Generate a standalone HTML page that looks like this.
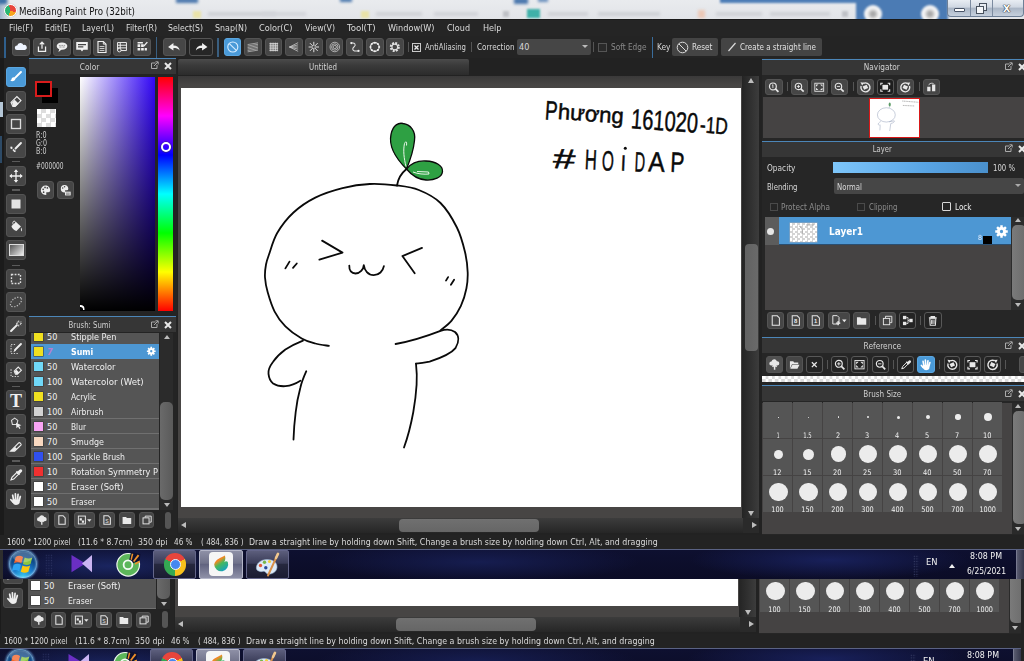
<!DOCTYPE html>
<html><head><meta charset="utf-8"><title>MediBang Paint Pro (32bit)</title>
<style>
*{box-sizing:border-box;margin:0;padding:0}
html,body{width:1024px;height:661px;overflow:hidden;background:#232323;}
body{position:relative;font-family:"DejaVu Sans Condensed","Liberation Sans",sans-serif;font-size:10px;color:#d8d8d8;}
.a{position:absolute}
.t{position:absolute;white-space:nowrap;line-height:12px}
.btn{position:absolute;background:#464646;border:1px solid #545454;border-radius:3px}
.btn.on{background:#4a9ad8;border-color:#5aa6e0}
.btn svg{position:absolute;left:0;top:0;width:100%;height:100%}
.hdr{position:absolute;background:#363636;border-top:1px solid #4c86b8;height:16px}
.hdr .c{position:absolute;left:0;right:22px;top:1.800px;text-align:center;line-height:12px}
.hdr .c span{display:inline-block;white-space:nowrap;color:#d0d0d0;font-size:9px}
.sep{position:absolute;width:1px;background:#555}
</style></head><body>

<div id="title" class="a" style="left:0;top:0;width:1024px;height:19px;background:linear-gradient(#e9ebee,#e2e4e8);overflow:hidden">
<div class="a" style="left:0;top:0;width:10px;height:19px;background:linear-gradient(90deg,#9db4cc,#e6e8ec)"></div>
<div class="a" style="left:-2px;top:-2px;width:9px;height:6px;background:#3b6ea5;filter:blur(1.5px)"></div>
<div class="a" style="left:176px;top:-2px;width:22px;height:5px;background:#4a77ad;filter:blur(1.5px)"></div>
<div class="a" style="left:340px;top:-2px;width:12px;height:4px;background:#4a77ad;filter:blur(1.5px)"></div>
<div class="a" style="left:514px;top:-2px;width:14px;height:6px;background:#4a77ad;filter:blur(1.5px)"></div>
<div class="a" style="left:538px;top:-2px;width:10px;height:4px;background:#6a8fbd;filter:blur(1.5px)"></div>
<div class="a" style="left:193px;top:11px;width:8px;height:7px;background:#e9e2a8;filter:blur(1.2px)"></div>
<div class="a" style="left:361px;top:11px;width:8px;height:7px;background:#e9e2a8;filter:blur(1.2px)"></div>
<div class="a" style="left:527px;top:9px;width:13px;height:9px;background:#3fb0a8;filter:blur(1.2px)"></div>
<div class="a" style="left:208px;top:12px;width:68px;height:4px;background:#cfd1d6;filter:blur(1.5px)"></div>
<div class="a" style="left:262px;top:12px;width:44px;height:4px;background:#d3d5da;filter:blur(1.5px)"></div>
<div class="a" style="left:376px;top:12px;width:46px;height:4px;background:#d0d2d7;filter:blur(1.5px)"></div>
<div class="a" style="left:434px;top:12px;width:44px;height:4px;background:#d1d3d8;filter:blur(1.5px)"></div>
<div class="a" style="left:548px;top:12px;width:40px;height:4px;background:#d0d2d7;filter:blur(1.5px)"></div>
<div class="a" style="left:598px;top:12px;width:62px;height:4px;background:#cfd1d6;filter:blur(1.5px)"></div>
<div class="a" style="left:716px;top:12px;width:46px;height:4px;background:#d0d2d7;filter:blur(1.5px)"></div>
<div class="a" style="left:770px;top:12px;width:60px;height:4px;background:#cfd1d6;filter:blur(1.5px)"></div>
<div class="a" style="left:503px;top:11px;width:6px;height:6px;background:#bfc1c6;filter:blur(1.2px)"></div>
<div class="a" style="left:842px;top:11px;width:6px;height:6px;background:#bfc1c6;filter:blur(1.2px)"></div>
<div class="a" style="left:698px;top:10px;width:7px;height:8px;background:#ecc8b6;filter:blur(1.5px)"></div>
<div class="a" style="left:720px;top:-2px;width:140px;height:5px;background:#4d7db6;filter:blur(1px)"></div>
<div class="a" style="left:856px;top:-3px;width:92px;height:26px;background:#4b7bb4;filter:blur(1.2px)"></div>
<div class="a" style="left:864px;top:5px;width:18px;height:18px;border-radius:9px;background:radial-gradient(#a8a8a8 15%,#f4f4f4 45%);filter:blur(1px)"></div>
<div class="a" style="left:921px;top:5px;width:18px;height:18px;border-radius:9px;background:radial-gradient(#a8a8a8 15%,#f4f4f4 45%);filter:blur(1px)"></div>
<div class="a" style="left:947px;top:0;width:77px;height:17px;border:1px solid #6d7f96;border-top:0;border-radius:0 0 4px 4px;background:linear-gradient(#e8edf3 0%,#cfd7e2 45%,#a9b5c5 50%,#c6d0dd 100%)"></div>
<div class="a" style="left:970px;top:0;width:1px;height:16px;background:#7c8ba0"></div>
<div class="a" style="left:992px;top:0;width:1px;height:16px;background:#7c8ba0"></div>
<div class="a" style="left:954px;top:8px;width:11px;height:4px;background:#fff;border:1px solid #4a5568;border-radius:1px"></div>
<div class="a" style="left:979px;top:3px;width:8px;height:8px;border:1.5px solid #49525f;background:#e8ecf2"></div>
<div class="a" style="left:976px;top:6px;width:8px;height:8px;border:1.5px solid #49525f;background:#f4f6f9"></div>
<div class="t" style="left:1003px;top:1px;font:bold 13px 'Liberation Sans',sans-serif;color:#fff;text-shadow:0 0 1px #333,0 0 1px #333,0 0 1px #333;line-height:14px">x</div>
<div class="a" style="left:4px;top:4px;width:13px;height:13px;border-radius:7px;background:conic-gradient(from 200deg,#2bb673 0 40%,#e8453c 40% 75%,#f6a31c 75% 100%);border:1px solid #fff;box-shadow:0 0 1px #888"></div>
<div class="t" style="left: 19px; top: 4.5px; font-size: 9.8px; color: rgb(17, 17, 17); line-height: 14px; font-family: &quot;DejaVu Sans Condensed&quot;, &quot;Liberation Sans&quot;, sans-serif; transform: scaleX(0.988); transform-origin: 0px 50%;">MediBang Paint Pro (32bit)</div>
</div>

<div id="menu" class="a" style="left:0;top:19px;width:1024px;height:17px;background:#252525;border-top:1px solid #1a1a1a">
<div class="t" style="left: 9px; top: 2px; font-size: 9.5px; color: rgb(220, 220, 220); transform: scaleX(0.929); transform-origin: 0px 50%;">File(F)</div>
<div class="t" style="left: 45px; top: 2px; font-size: 9.5px; color: rgb(220, 220, 220); transform: scaleX(0.908); transform-origin: 0px 50%;">Edit(E)</div>
<div class="t" style="left: 82px; top: 2px; font-size: 9.5px; color: rgb(220, 220, 220); transform: scaleX(0.907); transform-origin: 0px 50%;">Layer(L)</div>
<div class="t" style="left: 126px; top: 2px; font-size: 9.5px; color: rgb(220, 220, 220); transform: scaleX(0.919); transform-origin: 0px 50%;">Filter(R)</div>
<div class="t" style="left: 168px; top: 2px; font-size: 9.5px; color: rgb(220, 220, 220); transform: scaleX(0.91); transform-origin: 0px 50%;">Select(S)</div>
<div class="t" style="left: 214.5px; top: 2px; font-size: 9.5px; color: rgb(220, 220, 220); transform: scaleX(0.925); transform-origin: 0px 50%;">Snap(N)</div>
<div class="t" style="left: 258.5px; top: 2px; font-size: 9.5px; color: rgb(220, 220, 220); transform: scaleX(0.958); transform-origin: 0px 50%;">Color(C)</div>
<div class="t" style="left: 304.5px; top: 2px; font-size: 9.5px; color: rgb(220, 220, 220); transform: scaleX(0.915); transform-origin: 0px 50%;">View(V)</div>
<div class="t" style="left: 347px; top: 2px; font-size: 9.5px; color: rgb(220, 220, 220); transform: scaleX(1.006); transform-origin: 0px 50%;">Tool(T)</div>
<div class="t" style="left: 387.5px; top: 2px; font-size: 9.5px; color: rgb(220, 220, 220); transform: scaleX(0.953); transform-origin: 0px 50%;">Window(W)</div>
<div class="t" style="left: 447px; top: 2px; font-size: 9.5px; color: rgb(220, 220, 220); transform: scaleX(0.942); transform-origin: 0px 50%;">Cloud</div>
<div class="t" style="left: 483px; top: 2px; font-size: 9.5px; color: rgb(220, 220, 220); transform: scaleX(0.949); transform-origin: 0px 50%;">Help</div>
</div>

<div id="tbar" class="a" style="left:0;top:36px;width:1024px;height:22px;background:#242424">
<div class="a" style="left:4px;top:1px;width:2px;height:21px;background:#2f5f8c"></div>
<div class="btn" style="left:12px;top:2px;width:18px;height:18px;"><svg viewBox="0 0 18 18"><path d="M4.5 12.5a2.6 2.6 0 0 1 .3-5.2 3.6 3.6 0 0 1 6.9-.6 2.9 2.9 0 0 1 1.6 5.8z" fill="#eef4ff"></path></svg></div>
<div class="btn" style="left:32.5px;top:2px;width:18px;height:18px;"><svg viewBox="0 0 18 18"><path d="M5 8.5v5.5h8V8.5M9 11V3.5M6.5 6L9 3.5 11.500 6" fill="none" stroke="#f0f0f0" stroke-width="1.4"></path></svg></div>
<div class="btn" style="left:52.7px;top:2px;width:18px;height:18px;"><svg viewBox="0 0 18 18"><ellipse cx="9" cy="8" rx="6" ry="4.200" fill="#f0f0f0"></ellipse><path d="M6 11L5 14.500l4-3z" fill="#f0f0f0"></path><path d="M5.500 7.200h2M8.300 7.200h2M11 7.200h1.500M6 9h2.500M9.500 9h2.500" stroke="#777" stroke-width=".8"></path></svg></div>
<div class="btn" style="left:72.8px;top:2px;width:18px;height:18px;"><svg viewBox="0 0 18 18"><path d="M2.500 3.500h13v8.500h-5l-1.500 2.200L7.500 12h-5z" fill="#f0f0f0"></path><path d="M4.500 6.300h9M4.500 8.800h6" stroke="#444" stroke-width="1.300"></path></svg></div>
<div class="btn" style="left:93px;top:2px;width:18px;height:18px;"><svg viewBox="0 0 18 18"><path d="M4.500 2.800h6l3 3v9.400h-9z" fill="none" stroke="#f0f0f0" stroke-width="1.300"></path><path d="M10.500 2.800v3h3" fill="none" stroke="#f0f0f0" stroke-width="1"></path><path d="M6.300 8.500h5.400M6.300 10.700h5.400M6.300 12.900h5.400" stroke="#f0f0f0" stroke-width=".9"></path></svg></div>
<div class="btn" style="left:113px;top:2px;width:18px;height:18px;"><svg viewBox="0 0 18 18"><path d="M4 4h10v9H4zM4 7h10M4 10h10M7 4v9" fill="none" stroke="#f0f0f0" stroke-width="1.100"></path><circle cx="6" cy="12.500" r="2" fill="#484848" stroke="#f0f0f0"></circle></svg></div>
<div class="btn" style="left:133px;top:2px;width:18px;height:18px;"><svg viewBox="0 0 18 18"><path d="M4 6h3v3H4zM8 6h3v3H8zM4 10h3v3H4zM8 10h3v3H8zM12 10h2.500v3H12zM4 3.500h6v1.500H4z" fill="#f0f0f0"></path><path d="M11 8l4-4.500" stroke="#f0f0f0" stroke-width="1.600"></path></svg></div>
<div class="a" style="left:155.500px;top:1px;width:1.500px;height:21px;background:#3a5f80"></div>
<div class="btn" style="left:162.5px;top:2px;width:23.5px;height:18px;"><svg viewBox="0 0 23 18"><path d="M4 9l6-4.500v2.700c4 0 6.500 1.800 7 5.800-1.800-2.300-3.800-2.800-7-2.800v2.800z" fill="#f0f0f0"></path></svg></div>
<div class="btn" style="left:189px;top:2px;width:23.5px;height:18px;background:#262626;"><svg viewBox="0 0 23 18"><path d="M19 9l-6-4.500v2.700c-4 0-6.500 1.800-7 5.800 1.800-2.300 3.800-2.800 7-2.800v2.800z" fill="#f0f0f0"></path></svg></div>
<div class="a" style="left:217px;top:2px;width:1.500px;height:19px;background:#3a5f80"></div>
<div class="btn on" style="left:223.8px;top:2px;width:17.6px;height:18px;"><svg viewBox="0 0 18 18"><circle cx="9" cy="9" r="5.800" fill="none" stroke="#d6ecff" stroke-width="1.300"></circle><path d="M5 5l8 8" stroke="#d6ecff" stroke-width="1.300"></path></svg></div>
<div class="btn" style="left:244.3px;top:2px;width:17.6px;height:18px;"><svg viewBox="0 0 18 18"><path d="M3 13l12-2M3 11.300l12-2M3 9.600l12-2M3 7.900l12-2M3 6.200l12-2M3 14.600l12-2" stroke="#c8c8c8" stroke-width=".8"></path></svg></div>
<div class="btn" style="left:264.7px;top:2px;width:17.6px;height:18px;"><svg viewBox="0 0 18 18"><path d="M5 4v10M7 4v10M9 4v10M11 4v10M13 4v10M4 5h10M4 7h10M4 9h10M4 11h10M4 13h10" stroke="#dcdcdc" stroke-width=".9"></path></svg></div>
<div class="btn" style="left:285px;top:2px;width:17.6px;height:18px;"><svg viewBox="0 0 18 18"><path d="M4 9l10-5M4 9l10-2.500M4 9h10M4 9l10 2.500M4 9l10 5" stroke="#c8c8c8" stroke-width=".9"></path></svg></div>
<div class="btn" style="left:305.2px;top:2px;width:17.6px;height:18px;"><svg viewBox="0 0 18 18"><path d="M9 3v12M3 9h12M4.500 4.500l9 9M13.500 4.500l-9 9" stroke="#e8e8e8" stroke-width="1.100"></path><circle cx="9" cy="9" r="1.300" fill="#484848"></circle></svg></div>
<div class="btn" style="left:325.5px;top:2px;width:17.6px;height:18px;"><svg viewBox="0 0 18 18"><circle cx="9" cy="9" r="5.500" fill="none" stroke="#ccc" stroke-width=".9"></circle><circle cx="9" cy="9" r="3.700" fill="none" stroke="#ccc" stroke-width=".9"></circle><circle cx="9" cy="9" r="1.900" fill="none" stroke="#ccc" stroke-width=".9"></circle></svg></div>
<div class="btn" style="left:345.7px;top:2px;width:17.6px;height:18px;"><svg viewBox="0 0 18 18"><path d="M5 4.500c4-1 6 2 3 4.500s-1 5.500 5 4.500" fill="none" stroke="#e0e0e0" stroke-width="1.200"></path><circle cx="5" cy="4.500" r="1.300" fill="#eee"></circle><circle cx="13.300" cy="13.500" r="1.300" fill="#eee"></circle></svg></div>
<div class="btn" style="left:366px;top:2px;width:17.6px;height:18px;"><svg viewBox="0 0 18 18"><circle cx="9" cy="9" r="5" fill="none" stroke="#e8e8e8" stroke-width="1.300"></circle><g fill="#eee"><circle cx="9" cy="4" r="1.200"></circle><circle cx="9" cy="14" r="1.200"></circle><circle cx="4" cy="9" r="1.200"></circle><circle cx="14" cy="9" r="1.200"></circle><circle cx="5.500" cy="5.500" r="1.200"></circle><circle cx="12.500" cy="5.500" r="1.200"></circle><circle cx="5.500" cy="12.500" r="1.200"></circle><circle cx="12.500" cy="12.500" r="1.200"></circle></g></svg></div>
<div class="btn" style="left:386.2px;top:2px;width:17.6px;height:18px;"><svg viewBox="0 0 18 18"><circle cx="9" cy="9" r="4.600" fill="none" stroke="#e0e0e0" stroke-width="2.400" stroke-dasharray="2.200 1.400"></circle><circle cx="9" cy="9" r="3.300" fill="none" stroke="#e0e0e0" stroke-width="1.200"></circle></svg></div>
<div class="sep" style="left:407.500px;top:6px;height:10px"></div>
<div class="a" style="left:412px;top:7px;width:9px;height:9px;border:1px solid #c8c8c8;background:#2a2a2a"></div><svg class="a" style="left:412px;top:7px;width:9px;height:9px" viewBox="0 0 9 9"><path d="M2.500 2.500l4 4M6.500 2.500l-4 4" stroke="#eee" stroke-width="1.300"></path></svg>
<div class="t" style="left: 425px; top: 5px; font-size: 9px; color: rgb(216, 216, 216); transform: scaleX(0.857); transform-origin: 0px 50%;">AntiAliasing</div>
<div class="sep" style="left:470.500px;top:6px;height:10px"></div>
<div class="t" style="left: 476.5px; top: 5px; font-size: 9px; color: rgb(216, 216, 216); transform: scaleX(0.896); transform-origin: 0px 50%;">Correction</div>
<div class="a" style="left:517px;top:2.500px;width:73.500px;height:16.500px;background:#464646;border-radius:2px"></div>
<div class="t" style="left:519px;top:5px;font-size:9px;color:#d8d8d8">40</div>
<div class="a" style="left:581.500px;top:9px;border:3px solid transparent;border-top:3.500px solid #bbb;border-bottom:0"></div>
<div class="sep" style="left:593px;top:6px;height:10px"></div>
<div class="a" style="left:598px;top:7px;width:9px;height:9px;border:1px solid #555;background:#2a2a2a"></div>
<div class="t" style="left: 610.5px; top: 5px; font-size: 9px; color: rgb(138, 138, 138); transform: scaleX(0.912); transform-origin: 0px 50%;">Soft Edge</div>
<div class="a" style="left:651.500px;top:1px;width:1.500px;height:21px;background:#3a6d9c"></div>
<div class="t" style="left: 656.5px; top: 5px; font-size: 9px; color: rgb(216, 216, 216); transform: scaleX(0.922); transform-origin: 0px 50%;">Key</div>
<div class="a" style="left:672px;top:2px;width:46px;height:18px;background:#444;border-radius:2px"></div>
<svg class="a" style="left:676px;top:4.500px;width:13px;height:13px" viewBox="0 0 13 13"><circle cx="6.500" cy="6.500" r="5.300" fill="none" stroke="#ddd" stroke-width="1"></circle><path d="M2.800 2.800l7.400 7.400" stroke="#ddd" stroke-width="1"></path></svg>
<div class="t" style="left: 691.5px; top: 5px; font-size: 9px; color: rgb(224, 224, 224); transform: scaleX(0.907); transform-origin: 0px 50%;">Reset</div>
<div class="a" style="left:721px;top:2px;width:101px;height:18px;background:#444;border-radius:2px"></div>
<svg class="a" style="left:726px;top:5px;width:12px;height:12px" viewBox="0 0 12 12"><path d="M2.500 10L9.500 2" stroke="#ddd" stroke-width="1.200"></path></svg>
<div class="t" style="left: 740px; top: 5px; font-size: 9px; color: rgb(224, 224, 224); transform: scaleX(0.888); transform-origin: 0px 50%;">Create a straight line</div>
</div>


<div id="tools" class="a" style="left:0;top:58px;width:29px;height:477px;background:#242424">
<div class="a" style="left:0;top:0;width:4px;height:477px;background:#1b1b1b"></div>
<div class="a" style="left:0;top:44px;width:3px;height:15px;background:#b4c6d6"></div>
<div class="a" style="left:0;top:78px;width:2px;height:27px;background:#2d4a66"></div>
<div class="btn on" style="left:6px;top:9px;width:20px;height:20px;"><svg viewBox="0 0 20 20"><path d="M15.500 4.500L9 11" stroke="#fff" stroke-width="2.200" stroke-linecap="round"></path><path d="M8.300 10.300c-1.500-.5-3 .3-3.200 2-.1 1-.8 1.600-1.600 1.800 2 1 5 .7 5.800-1.500z" fill="#fff"></path></svg></div>
<div class="btn" style="left:6px;top:32.5px;width:20px;height:20px;"><svg viewBox="0 0 20 20"><path d="M4.500 11.500L11 5l4.500 4.500L9 16H6.500z" fill="none" stroke="#eee" stroke-width="1.300"></path><path d="M5.500 11.500l3-3 4.500 4.500-3.500 3H7z" fill="#eee"></path></svg></div>
<div class="btn" style="left:6px;top:56px;width:20px;height:20px;"><svg viewBox="0 0 20 20"><rect x="5" y="5" width="10" height="10" fill="none" stroke="#ddd" stroke-width="1.500"></rect></svg></div>
<div class="btn" style="left:6px;top:79.5px;width:20px;height:20px;"><svg viewBox="0 0 20 20"><path d="M15.500 4.500L9.500 10.500" stroke="#eee" stroke-width="2.200" stroke-linecap="round"></path><path d="M4.500 9.500l2 2 2 2" stroke="#eee" stroke-width="1.800" stroke-dasharray="1.800 1.200"></path><rect x="3.800" y="8.500" width="2" height="2" fill="#eee"></rect><rect x="7.500" y="12.500" width="2" height="2" fill="#eee"></rect></svg></div>
<div class="a" style="left:12px;top:102.5px;width:8px;height:1.500px;background:#5a5a5a"></div>
<div class="btn" style="left:6px;top:108px;width:20px;height:20px;"><svg viewBox="0 0 20 20"><path d="M10 3.500v13M3.500 10h13" stroke="#eee" stroke-width="1.500"></path><path d="M10 2.500l2.500 3h-5zM10 17.500l2.500-3h-5zM2.500 10l3-2.500v5zM17.500 10l-3-2.500v5z" fill="#eee"></path></svg></div>
<div class="a" style="left:12px;top:131px;width:8px;height:1.500px;background:#5a5a5a"></div>
<div class="btn" style="left:6px;top:135.5px;width:20px;height:20px;"><svg viewBox="0 0 20 20"><rect x="5" y="5" width="10" height="10" fill="#e4e4e4"></rect></svg></div>
<div class="btn" style="left:6px;top:159px;width:20px;height:20px;"><svg viewBox="0 0 20 20"><path d="M5 9l5-4.500 5.500 5-5 5c-1.500 0-5.500-3-5.500-5.500z" fill="#eee"></path><path d="M7 7.500c-1-2-.5-4 1-4s2 2 2 3.500" fill="none" stroke="#eee" stroke-width="1"></path><path d="M15.800 10.500c.8 1.500 1.200 3 .4 4.500-.8-.8-1-3-.4-4.500z" fill="#eee"></path></svg></div>
<div class="btn" style="left:6px;top:182px;width:20px;height:20px;"><div style="position:absolute;left:1.500px;top:3px;right:1.500px;bottom:3.500px;border:1px solid #ddd;background:linear-gradient(135deg,#555,#eee)"></div></div>
<div class="a" style="left:12px;top:206.5px;width:8px;height:1.500px;background:#5a5a5a"></div>
<div class="btn" style="left:6px;top:211px;width:20px;height:20px;"><svg viewBox="0 0 20 20"><rect x="5" y="5" width="10" height="10" fill="none" stroke="#ddd" stroke-width="1.500" stroke-dasharray="2 1.500"></rect></svg></div>
<div class="btn" style="left:6px;top:234px;width:20px;height:20px;"><svg viewBox="0 0 20 20"><ellipse cx="10" cy="10" rx="7" ry="4.200" transform="rotate(-35 10 10)" fill="none" stroke="#bbb" stroke-width="1.300" stroke-dasharray="1.500 1.500"></ellipse></svg></div>
<div class="btn" style="left:6px;top:257.5px;width:20px;height:20px;"><svg viewBox="0 0 20 20"><path d="M4.500 15.500L11 9" stroke="#eee" stroke-width="2.200" stroke-linecap="round"></path><path d="M13 4v2M13 8.500v2M10 7h2M14.500 7h2M11 5l1 1M15.500 5l-1 1M15.500 9l-1-1" stroke="#eee" stroke-width="1"></path></svg></div>
<div class="btn" style="left:6px;top:281px;width:20px;height:20px;"><svg viewBox="0 0 20 20"><path d="M4.500 6v9h9" fill="none" stroke="#ccc" stroke-width="1.300" stroke-dasharray="1.500 1.500"></path><path d="M4.500 5h5" stroke="#ccc" stroke-width="1.300" stroke-dasharray="1.500 1.500"></path><path d="M15.500 4.500L9 11" stroke="#eee" stroke-width="2.200" stroke-linecap="round"></path><path d="M8.500 10.500l-1.500 3 3-1.500z" fill="#eee"></path></svg></div>
<div class="btn" style="left:6px;top:304px;width:20px;height:20px;"><svg viewBox="0 0 20 20"><path d="M4.500 7v8h9" fill="none" stroke="#ccc" stroke-width="1.300" stroke-dasharray="1.500 1.500"></path><path d="M8 9l4.500-4.500L16 8l-4.500 4.500H9.500z" fill="none" stroke="#eee" stroke-width="1.200"></path><path d="M8.500 9.500l2-2 3 3-2 2H10z" fill="#eee"></path></svg></div>
<div class="a" style="left:12px;top:327.5px;width:8px;height:1.500px;background:#5a5a5a"></div>
<div class="btn" style="left:6px;top:332px;width:20px;height:20px;"><div class="t" style="left:0;right:0;top:1px;text-align:center;font:bold 18px/18px 'Liberation Serif',serif;color:#f0f0f0">T</div></div>
<div class="btn" style="left:6px;top:355.5px;width:20px;height:20px;"><svg viewBox="0 0 20 20"><path d="M5 6l3.500-2.500L12 6l-1 4.500H6z" fill="none" stroke="#ddd" stroke-width="1.200"></path><path d="M10 8.500l6 3-2.500.8 1.500 2.500-1.200.7-1.500-2.500-1.800 1.800z" fill="#eee"></path></svg></div>
<div class="btn" style="left:6px;top:379px;width:20px;height:20px;"><svg viewBox="0 0 20 20"><path d="M4 14.500l9-9c1-1 3.500 1.500 2.500 2.500l-7 6.500z" fill="none" stroke="#eee" stroke-width="1.300"></path><path d="M4 14.500l5-4.500 2 2-3 2.500z" fill="#eee"></path></svg></div>
<div class="a" style="left:12px;top:402px;width:8px;height:1.500px;background:#5a5a5a"></div>
<div class="btn" style="left:6px;top:407px;width:20px;height:20px;"><svg viewBox="0 0 20 20"><path d="M4.500 15.500l1-3 5.500-5.500 2 2-5.500 5.500z" fill="none" stroke="#eee" stroke-width="1.300"></path><path d="M10.500 6l3.500 3.500M12 7.500l2.500-2.500c1-1 2 0 1 1L13 8.500" stroke="#eee" stroke-width="2" fill="none"></path></svg></div>
<div class="btn" style="left:6px;top:430.5px;width:20px;height:20px;"><svg viewBox="0 0 20 20"><g stroke="#eee" stroke-width="1.900" stroke-linecap="round"><path d="M7.300 10.500L6.300 5.800M9.600 10L9.300 4.200M11.800 10.200L12.300 4.900M13.700 11L14.800 7.200M6.800 13.500L4.300 10.800"></path></g><path d="M6.300 10L14.500 10.500L14 14.500C13 16.800 9 17.300 7.500 15.800L5.500 13z" fill="#eee"></path></svg></div>
</div>
<div id="color" class="a" style="left:29px;top:58px;width:148px;height:258px;background:#242424">
<div class="hdr" style="left:0px;top:-0.3px;width:147px"><div class="c" style="right:25px"><span style="transform: scaleX(0.922); transform-origin: 50% 50%;">Color</span></div><svg class="a" style="right:17px;top:2.500px;width:9px;height:9px" viewBox="0 0 9 9"><path d="M5.500 2H1.500v5.500h5.500V4" fill="none" stroke="#aaa" stroke-width="1"></path><path d="M4 5l4-4M5.500 .800h2.700v2.700" fill="none" stroke="#aaa" stroke-width="1"></path></svg><svg class="a" style="right:4px;top:3.500px;width:8px;height:8px" viewBox="0 0 8 8"><path d="M1 1l6 6M7 1l-6 6" stroke="#e8e8e8" stroke-width="2"></path></svg></div>
<div class="a" style="left:13px;top:29.500px;width:16px;height:15.500px;background:#000"></div>
<div class="a" style="left:5.500px;top:22.500px;width:17px;height:16px;background:#000;border:2px solid #d81c1c"></div>
<div class="a" style="left:8px;top:50.500px;width:18.500px;height:18px;background:#fff conic-gradient(#ddd 25%,#fff 0 50%,#ddd 0 75%,#fff 0) 0 0/9px 9px"></div>
<div class="t" style="left: 6.5px; top: 73px; font-size: 8px; line-height: 9px; color: rgb(208, 208, 208); transform: scaleX(0.892); transform-origin: 0px 50%;">R:0</div>
<div class="t" style="left: 6.5px; top: 81.2px; font-size: 8px; line-height: 9px; color: rgb(208, 208, 208); transform: scaleX(0.873); transform-origin: 0px 50%;">G:0</div>
<div class="t" style="left: 6.5px; top: 89.4px; font-size: 8px; line-height: 9px; color: rgb(208, 208, 208); transform: scaleX(0.878); transform-origin: 0px 50%;">B:0</div>
<div class="t" style="left: 6.5px; top: 103.5px; font-size: 8px; line-height: 9px; color: rgb(208, 208, 208); transform: scaleX(0.821); transform-origin: 0px 50%;">#000000</div>
<div class="btn" style="left:7.5px;top:122.5px;width:17px;height:18.5px;"><svg viewBox="0 0 16 16"><path d="M8 3a5 5 0 1 0 0 10c1 0 1.300-.8.800-1.500-.5-.8 0-1.500 1-1.500h1.200a2 2 0 0 0 2-2c0-2.800-2.300-5-5-5z" fill="#eee"></path><circle cx="5.500" cy="7" r=".9" fill="#444"></circle><circle cx="7.500" cy="5" r=".9" fill="#444"></circle><circle cx="10" cy="5.500" r=".9" fill="#444"></circle><circle cx="6" cy="10" r=".9" fill="#444"></circle></svg></div>
<div class="btn" style="left:27.8px;top:122.5px;width:17px;height:18.5px;"><svg viewBox="0 0 16 16"><path d="M7 2.500a4 4 0 1 0 0 8c.8 0 1-.6.600-1.200-.4-.6 0-1.200.800-1.200h1a1.600 1.600 0 0 0 1.600-1.600c0-2.200-1.800-4-4-4z" fill="#eee"></path><circle cx="5" cy="5.500" r=".8" fill="#444"></circle><circle cx="7" cy="4.200" r=".8" fill="#444"></circle><rect x="7.500" y="9.500" width="6" height="4" fill="#eee"></rect><path d="M8.500 11h4M8.500 12.300h4" stroke="#444" stroke-width=".6"></path></svg></div>
<div class="a" style="left:51px;top:18.500px;width:75px;height:234px;background:linear-gradient(to top,#000,rgba(0,0,0,0)),linear-gradient(to right,#fff,#3206f8)"></div>
<div class="a" style="left:129px;top:18.500px;width:15px;height:234px;background:linear-gradient(to bottom,#f00 0%,#f0f 16.670%,#00f 33.330%,#0ff 50%,#0f0 66.670%,#ff0 83.330%,#f00 100%)"></div>
<div class="a" style="left:131.500px;top:84px;width:10px;height:10px;border:2px solid #fff;border-radius:5px;box-shadow:0 0 0 .5px #335"></div>
<div class="a" style="left:46.500px;top:246.500px;width:9px;height:9px;border:2px solid #fff;border-radius:5px;clip-path:inset(0 0 3.500px 4.500px)"></div>
</div>
<div id="brush" class="a" style="left:29px;top:316px;width:148px;height:219px;background:#242424">
<div class="hdr" style="left:0px;top:0.2px;width:147px"><div class="c" style="right:25px"><span style="transform: scaleX(0.856); transform-origin: 50% 50%;">Brush: Sumi</span></div><svg class="a" style="right:17px;top:2.500px;width:9px;height:9px" viewBox="0 0 9 9"><path d="M5.500 2H1.500v5.500h5.500V4" fill="none" stroke="#aaa" stroke-width="1"></path><path d="M4 5l4-4M5.500 .800h2.700v2.700" fill="none" stroke="#aaa" stroke-width="1"></path></svg><svg class="a" style="right:4px;top:3.500px;width:8px;height:8px" viewBox="0 0 8 8"><path d="M1 1l6 6M7 1l-6 6" stroke="#e8e8e8" stroke-width="2"></path></svg></div>
<div class="a" style="left:2px;top:17px;width:128px;height:176.500px;background:#707070;overflow:hidden">
<div class="a" style="left:0;top:-3.60px;width:128px;height:14.200px;background:#555555"><div class="a" style="left:3px;top:2.500px;width:9px;height:9px;background:#f0e020;box-shadow:0 0 0 .5px #333"></div><div class="t" style="left:16px;top:1.500px;font-size:9px;color:#f0f0f0">50</div> <div class="t" style="left: 40px; top: 1.5px; font-size: 9px; color: rgb(240, 240, 240); transform: scaleX(0.999); transform-origin: 0px 50%;">Stipple Pen</div></div>
<div class="a" style="left:0;top:11.38px;width:128px;height:14.200px;background:#4d97d3"><div class="a" style="left:3px;top:2.500px;width:9px;height:9px;background:#f0e020;box-shadow:0 0 0 .5px #333"></div><div class="t" style="left:16px;top:1.500px;font-size:9px;color:#b77fd0;font-weight:bold;font-style:italic">7</div> <div class="t" style="left: 40px; top: 1.5px; font-size: 9px; color: rgb(255, 255, 255); font-weight: bold; transform: scaleX(0.978); transform-origin: 0px 50%;">Sumi</div><svg class="a" style="left:114.500px;top:2px;width:10.500px;height:10.500px" viewBox="0 0 20 20"><path d="M15.98 8.36L18.34 8.34L18.34 11.66L15.98 11.64L15.39 13.07L17.07 14.72L14.72 17.07L13.07 15.39L11.64 15.98L11.66 18.34L8.34 18.34L8.36 15.98L6.93 15.39L5.28 17.07L2.93 14.72L4.61 13.07L4.02 11.64L1.66 11.66L1.66 8.34L4.02 8.36L4.61 6.93L2.93 5.28L5.28 2.93L6.93 4.61L8.36 4.02L8.34 1.66L11.66 1.66L11.64 4.02L13.07 4.61L14.72 2.93L17.07 5.28L15.39 6.93ZM7.80 10.00a2.20 2.20 0 1 0 4.40 0a2.20 2.20 0 1 0 -4.40 0Z" fill="#fff" fill-rule="evenodd"></path></svg></div>
<div class="a" style="left:0;top:26.36px;width:128px;height:14.200px;background:#555555"><div class="a" style="left:3px;top:2.500px;width:9px;height:9px;background:#70d8f8;box-shadow:0 0 0 .5px #333"></div><div class="t" style="left:16px;top:1.500px;font-size:9px;color:#f0f0f0">50</div> <div class="t" style="left: 40px; top: 1.5px; font-size: 9px; color: rgb(240, 240, 240); transform: scaleX(1.02); transform-origin: 0px 50%;">Watercolor</div></div>
<div class="a" style="left:0;top:41.34px;width:128px;height:14.200px;background:#555555"><div class="a" style="left:3px;top:2.500px;width:9px;height:9px;background:#70d8f8;box-shadow:0 0 0 .5px #333"></div><div class="t" style="left:16px;top:1.500px;font-size:9px;color:#f0f0f0">100</div> <div class="t" style="left: 40px; top: 1.5px; font-size: 9px; color: rgb(240, 240, 240); transform: scaleX(1.067); transform-origin: 0px 50%;">Watercolor (Wet)</div></div>
<div class="a" style="left:0;top:56.32px;width:128px;height:14.200px;background:#555555"><div class="a" style="left:3px;top:2.500px;width:9px;height:9px;background:#f0e020;box-shadow:0 0 0 .5px #333"></div><div class="t" style="left:16px;top:1.500px;font-size:9px;color:#f0f0f0">50</div> <div class="t" style="left: 40px; top: 1.5px; font-size: 9px; color: rgb(240, 240, 240); transform: scaleX(0.937); transform-origin: 0px 50%;">Acrylic</div></div>
<div class="a" style="left:0;top:71.30px;width:128px;height:14.200px;background:#555555"><div class="a" style="left:3px;top:2.500px;width:9px;height:9px;background:#d2d2d2;box-shadow:0 0 0 .5px #333"></div><div class="t" style="left:16px;top:1.500px;font-size:9px;color:#f0f0f0">100</div> <div class="t" style="left: 40px; top: 1.5px; font-size: 9px; color: rgb(240, 240, 240); transform: scaleX(0.954); transform-origin: 0px 50%;">Airbrush</div></div>
<div class="a" style="left:0;top:86.28px;width:128px;height:14.200px;background:#555555"><div class="a" style="left:3px;top:2.500px;width:9px;height:9px;background:#f8a4f4;box-shadow:0 0 0 .5px #333"></div><div class="t" style="left:16px;top:1.500px;font-size:9px;color:#f0f0f0">50</div> <div class="t" style="left: 40px; top: 1.5px; font-size: 9px; color: rgb(240, 240, 240); transform: scaleX(0.922); transform-origin: 0px 50%;">Blur</div></div>
<div class="a" style="left:0;top:101.26px;width:128px;height:14.200px;background:#555555"><div class="a" style="left:3px;top:2.500px;width:9px;height:9px;background:#f8d8c0;box-shadow:0 0 0 .5px #333"></div><div class="t" style="left:16px;top:1.500px;font-size:9px;color:#f0f0f0">70</div> <div class="t" style="left: 40px; top: 1.5px; font-size: 9px; color: rgb(240, 240, 240); transform: scaleX(0.987); transform-origin: 0px 50%;">Smudge</div></div>
<div class="a" style="left:0;top:116.24px;width:128px;height:14.200px;background:#555555"><div class="a" style="left:3px;top:2.500px;width:9px;height:9px;background:#3050f0;box-shadow:0 0 0 .5px #333"></div><div class="t" style="left:16px;top:1.500px;font-size:9px;color:#f0f0f0">100</div> <div class="t" style="left: 40px; top: 1.5px; font-size: 9px; color: rgb(240, 240, 240); transform: scaleX(0.957); transform-origin: 0px 50%;">Sparkle Brush</div></div>
<div class="a" style="left:0;top:131.22px;width:128px;height:14.200px;background:#555555"><div class="a" style="left:3px;top:2.500px;width:9px;height:9px;background:#f03030;box-shadow:0 0 0 .5px #333"></div><div class="t" style="left:16px;top:1.500px;font-size:9px;color:#f0f0f0">10</div> <div class="t" style="left: 40px; top: 1.5px; font-size: 9px; color: rgb(240, 240, 240); transform: scaleX(1.014); transform-origin: 0px 50%;">Rotation Symmetry P</div></div>
<div class="a" style="left:0;top:146.20px;width:128px;height:14.200px;background:#555555"><div class="a" style="left:3px;top:2.500px;width:9px;height:9px;background:#ffffff;box-shadow:0 0 0 .5px #333"></div><div class="t" style="left:16px;top:1.500px;font-size:9px;color:#f0f0f0">50</div> <div class="t" style="left: 40px; top: 1.5px; font-size: 9px; color: rgb(240, 240, 240); transform: scaleX(1.034); transform-origin: 0px 50%;">Eraser (Soft)</div></div>
<div class="a" style="left:0;top:161.18px;width:128px;height:14.200px;background:#555555"><div class="a" style="left:3px;top:2.500px;width:9px;height:9px;background:#ffffff;box-shadow:0 0 0 .5px #333"></div><div class="t" style="left:16px;top:1.500px;font-size:9px;color:#f0f0f0">50</div> <div class="t" style="left: 40px; top: 1.5px; font-size: 9px; color: rgb(240, 240, 240); transform: scaleX(0.945); transform-origin: 0px 50%;">Eraser</div></div>
</div>
<div class="a" style="left:131px;top:17px;width:13px;height:176.500px;background:#2b2b2b"></div>
<div class="a" style="left:134.500px;top:19px;border:3px solid transparent;border-bottom:4.500px solid #bbb;border-top:0"></div>
<div class="a" style="left:134.500px;top:187px;border:3px solid transparent;border-top:4.500px solid #bbb;border-bottom:0"></div>
<div class="a" style="left:130.500px;top:86px;width:13px;height:98px;border-radius:5px;background:linear-gradient(90deg,#6a6a6a,#5a5a5a)"></div>
<div class="btn" style="left:4.6px;top:196.4px;width:15.6px;height:16px;"><svg viewBox="0 0 16 16"><path d="M4.500 9.500a2.300 2.300 0 0 1 .3-4.600 3.200 3.200 0 0 1 6.200-.4 2.500 2.500 0 0 1 .5 5z" fill="#e8e8e8"></path><path d="M8 13.500V8M5.800 10L8 7.800l2.200 2.200" stroke="#e8e8e8" stroke-width="1.600" fill="none"></path></svg></div>
<div class="btn" style="left:24.8px;top:196.4px;width:15.6px;height:16px;"><svg viewBox="0 0 16 16"><path d="M4.500 3h5l2.500 2.500V13h-7.500z" fill="none" stroke="#e8e8e8" stroke-width="1.200"></path></svg></div>
<div class="btn" style="left:44.6px;top:196.4px;width:21px;height:16px;"><svg viewBox="0 0 21 16"><rect x="3.500" y="3.500" width="8" height="9" fill="none" stroke="#e8e8e8" stroke-width="1.100"></rect><path d="M5 6h2.500v2.500H5zM7.500 8.500H10V11H7.500z" fill="#e8e8e8"></path><path d="M13.500 7h5l-2.500 3z" fill="#e8e8e8"></path></svg></div>
<div class="btn" style="left:69.8px;top:196.4px;width:15.8px;height:16px;"><svg viewBox="0 0 16 16"><path d="M4.500 3h5l2.500 2.500V13h-7.500z" fill="none" stroke="#e8e8e8" stroke-width="1.200"></path><text x="6" y="11.500" font-size="6" fill="#e8e8e8" font-family="Liberation Sans,sans-serif">S</text></svg></div>
<div class="btn" style="left:89.8px;top:196.4px;width:15.8px;height:16px;"><svg viewBox="0 0 16 16"><path d="M3 4.500h4l1 1.200h5V12.500H3z" fill="#e8e8e8"></path></svg></div>
<div class="btn" style="left:109.6px;top:196.4px;width:15.8px;height:16px;"><svg viewBox="0 0 16 16"><rect x="3.500" y="5.500" width="7" height="7" fill="none" stroke="#e8e8e8" stroke-width="1.100"></rect><path d="M6 5V3.500h7v7h-2" fill="none" stroke="#e8e8e8" stroke-width="1.100"></path></svg></div>
<div class="a" style="left:135.500px;top:196px;width:6px;height:16.500px;border-radius:3px;background:#555"></div>
</div>

<div id="canvas" class="a" style="left:177px;top:58px;width:585px;height:477px;background:#222">
<div class="a" style="left:1px;top:1px;width:291px;height:15.500px;border-radius:2px 2px 0 0;background:linear-gradient(#4b4b4b,#3a3a3a 40%,#2c2c2c)"></div>
<div class="t" style="left: 132px; top: 3px; font-size: 9px; color: rgb(212, 212, 212); transform: scaleX(0.874); transform-origin: 0px 50%;">Untitled</div>
<div class="a" style="left:1px;top:18px;width:566px;height:441.500px;background:linear-gradient(#3a3939,#474544 9px,#474544)"></div>
<div class="a" style="left:4px;top:29.500px;width:560px;height:419.500px;background:#fff"></div>
<div class="a" style="left:565px;top:18px;width:17px;height:441.500px;background:linear-gradient(90deg,#242424,#3c3c3c)"></div>
<div class="a" style="left:571px;top:20px;border:3px solid transparent;border-bottom:5px solid #bdbdbd;border-top:0"></div>
<div class="a" style="left:571px;top:453px;border:3px solid transparent;border-top:5px solid #bdbdbd;border-bottom:0"></div>
<div class="a" style="left:567.500px;top:186px;width:13.500px;height:107px;border-radius:4px;background:linear-gradient(90deg,#626262,#6a6a6a)"></div>
<div class="a" style="left:1px;top:459.500px;width:581px;height:15.500px;background:linear-gradient(#3c3c3c,#262626)"></div>
<div class="a" style="left:3.500px;top:464px;border:3px solid transparent;border-right:5px solid #bdbdbd;border-left:0"></div>
<div class="a" style="left:574.500px;top:464px;border:3px solid transparent;border-left:5px solid #bdbdbd;border-right:0"></div>
<div class="a" style="left:221.500px;top:461px;width:140.500px;height:12.500px;border-radius:4px;background:linear-gradient(#707070,#666)"></div>
<div class="a" style="left:566px;top:459.500px;width:16px;height:15.500px;background:#2a2a2a"></div>
<div class="a" style="left:574.500px;top:464px;border:3px solid transparent;border-left:5px solid #bdbdbd;border-right:0"></div>
<svg class="a" style="left:4px;top:29.500px;width:560px;height:419.500px" viewBox="181 87.500 560 419.500">
<path d="M406.500 168.500C398 160 388 148 391 134C393 124 399 122 403 123C410 124 416 130 414.500 140C413.500 150 410 160 406.500 168.500Z" fill="#2ea043" stroke="#0a0a0a" stroke-width="1.300"></path>
<path d="M406.500 168.500C411 163 418 160 426 160.500C436 161 443 165 442.500 171C442 177 434 180 426 179.500C418 179 411 174 406.500 168.500Z" fill="#2ea043" stroke="#0a0a0a" stroke-width="1.300"></path>
<path d="M406 166C404 158 403 150 404.500 143C406 140 407 141 406.500 145" fill="none" stroke="#e8f5e8" stroke-width="1"></path>
<path d="M413 171.500C418 173.500 424 174 429 173.500L428.500 171.500L417 171" fill="none" stroke="#e8f5e8" stroke-width="1"></path>
<path d="M406.500 168.500C401 173 398 178 397 185" fill="none" stroke="#0a0a0a" stroke-width="1.800" stroke-linecap="round" stroke-linejoin="round"></path>
<path d="M328.9 345.4C326.6 345.0 319.8 344.2 315.3 343.0C310.8 341.8 306.7 340.9 301.7 338.0C296.7 335.1 289.9 330.3 285.4 325.8C280.9 321.3 277.4 316.5 274.5 310.8C271.6 305.1 269.3 297.4 267.7 291.8C266.1 286.2 265.3 281.6 265.0 277.0C264.7 272.4 265.3 267.8 266.0 264.0C266.7 260.2 267.1 259.2 269.0 254.0C270.9 248.8 273.1 239.5 277.2 232.5C281.3 225.5 287.1 217.9 293.5 212.0C299.9 206.1 307.1 201.2 315.3 197.1C323.5 193.0 333.4 189.9 342.5 187.6C351.6 185.3 360.7 183.9 369.8 183.5C378.9 183.1 388.8 184.0 397.0 185.0C405.2 186.0 411.6 186.6 418.8 189.5C426.1 192.4 434.1 196.2 440.5 202.5C446.9 208.8 452.8 218.8 456.9 227.0C461.0 235.2 463.2 244.0 465.0 251.5C466.8 259.0 467.5 265.9 467.7 272.0C467.9 278.1 467.5 282.4 466.4 288.0C465.3 293.6 463.4 300.0 460.9 305.4C458.4 310.8 454.8 316.3 451.4 320.4C448.0 324.5 442.3 328.2 440.5 329.8" fill="none" stroke="#0a0a0a" stroke-width="1.800" stroke-linecap="round" stroke-linejoin="round"></path>
<path d="M395.600 343.500C410 341 424.200 336.700 440.500 330.400C446 328.500 451.400 329 455 331.500C459 335 459.500 341 455.500 347.600C452 352 446 355.700 429.600 361.200C424 362.500 420 363 416 363.100" fill="none" stroke="#0a0a0a" stroke-width="1.800" stroke-linecap="round" stroke-linejoin="round"></path>
<path d="M416 363.100C417 372 417 378 416.600 384.300C416 394 415 402 413.300 411.500C411 424 408 436 404 447" fill="none" stroke="#0a0a0a" stroke-width="1.800" stroke-linecap="round" stroke-linejoin="round"></path>
<path d="M303 340.200C296 343 291 345.500 285.400 349C280 353 276 357 273.100 361.200C269.500 366 268 370 268.500 373.400C269 378 270.500 381 273.100 383C277 385.500 281 386 285.400 385.700C291 385 296 383 300.400 380.200" fill="none" stroke="#0a0a0a" stroke-width="1.800" stroke-linecap="round" stroke-linejoin="round"></path>
<path d="M306.300 370.700C303.500 377 301.500 382 300.400 387C298 396 296.500 404 295.700 411.500C294.500 421 293.800 430 293.500 439" fill="none" stroke="#0a0a0a" stroke-width="1.800" stroke-linecap="round" stroke-linejoin="round"></path>
<path d="M322.100 240.100L342.500 252.100L319.400 259.200" fill="none" stroke="#0a0a0a" stroke-width="1.800" stroke-linecap="round" stroke-linejoin="round"></path>
<path d="M422 247.400L402.400 255.600L414.700 272.800" fill="none" stroke="#0a0a0a" stroke-width="1.800" stroke-linecap="round" stroke-linejoin="round"></path>
<path d="M349.300 265.100C349 270 351.500 273 355.500 273C360 273 363.500 269 363.800 264.600C364.500 270 368 274.700 373.800 274.700C379 274.700 383 270.500 383.900 265.700" fill="none" stroke="#0a0a0a" stroke-width="1.800" stroke-linecap="round" stroke-linejoin="round"></path>
<path d="M285.400 267.900L289.500 261.100M293 267.300L296.800 263M446 280.100L448.100 276.600M450.900 284.200L454.100 279.300" fill="none" stroke="#0a0a0a" stroke-width="1.800" stroke-linecap="round" stroke-linejoin="round"></path>
<text transform="rotate(4 543 118)" font-family="'Liberation Sans',sans-serif" fill="#0a0a0a" stroke="#0a0a0a" stroke-width=".5"><tspan x="544.500" y="119" font-size="27" textLength="12.500" lengthAdjust="spacingAndGlyphs">P</tspan><tspan x="557.500" y="117.500" font-size="22" textLength="66" lengthAdjust="spacingAndGlyphs">hương</tspan><tspan x="631" y="121.500" font-size="28" textLength="67" lengthAdjust="spacingAndGlyphs">161020</tspan><tspan x="700" y="121" font-size="23" textLength="28" lengthAdjust="spacingAndGlyphs">-1D</tspan></text>
<text transform="rotate(2.500 552 166)" font-family="'Liberation Sans',sans-serif" fill="#0a0a0a" stroke="#0a0a0a" stroke-width=".5" font-size="28"><tspan x="552.8" y="167.5" textLength="22.2" lengthAdjust="spacingAndGlyphs">#</tspan><tspan x="584.5" y="167" textLength="12" lengthAdjust="spacingAndGlyphs">H</tspan><tspan x="601.5" y="167.5" textLength="12" lengthAdjust="spacingAndGlyphs">O</tspan><tspan x="620.5" y="167" textLength="5" lengthAdjust="spacingAndGlyphs" font-size="22">I</tspan><tspan x="634.5" y="167.5" textLength="10.5" lengthAdjust="spacingAndGlyphs">D</tspan><tspan x="648" y="166.5" textLength="16.5" lengthAdjust="spacingAndGlyphs">A</tspan><tspan x="670" y="166" textLength="14" lengthAdjust="spacingAndGlyphs">P</tspan></text>
<circle cx="625.300" cy="147.800" r="1.500" fill="#0a0a0a"></circle>
</svg>
</div>

<div id="right" class="a" style="left:762px;top:58px;width:262px;height:477px;background:#262626;overflow:hidden">
<div class="hdr" style="left:0;top:0.7px;width:262px"><div class="c"><span style="transform: scaleX(0.909); transform-origin: 50% 50%;">Navigator</span></div><svg class="a" style="right:11.500px;top:2.500px;width:9px;height:9px" viewBox="0 0 9 9"><path d="M5.500 2H1.500v5.500h5.500V4" fill="none" stroke="#aaa" stroke-width="1"></path><path d="M4 5l4-4M5.500 .800h2.700v2.700" fill="none" stroke="#aaa" stroke-width="1"></path></svg><svg class="a" style="right:-1.500px;top:3.500px;width:8px;height:8px" viewBox="0 0 8 8"><path d="M1 1l6 6M7 1l-6 6" stroke="#e8e8e8" stroke-width="2"></path></svg></div>
<div class="a" style="left:0;top:18px;width:262px;height:21px;background:#262626"></div>
<div class="btn" style="left:3px;top:20.5px;width:17.5px;height:16.5px;"><svg viewBox="0 0 18 17"><circle cx="8" cy="7.500" r="4" fill="none" stroke="#e8e8e8" stroke-width="1.400"></circle><path d="M11 10.500l3.500 3.500" stroke="#e8e8e8" stroke-width="2"></path><path d="M8 5.500v4M7 6.500l1-1" stroke="#e8e8e8" stroke-width="1"></path></svg></div>
<div class="sep" style="left:24.5px;top:24px;height:9px"></div>
<div class="btn" style="left:29px;top:20.5px;width:16.5px;height:16.5px;"><svg viewBox="0 0 18 17"><circle cx="8" cy="7.500" r="4" fill="none" stroke="#e8e8e8" stroke-width="1.400"></circle><path d="M11 10.500l3.500 3.500" stroke="#e8e8e8" stroke-width="2"></path><path d="M6 7.500h4M8 5.500v4" stroke="#e8e8e8" stroke-width="1.100"></path></svg></div>
<div class="btn" style="left:49.2px;top:20.5px;width:16.5px;height:16.5px;"><svg viewBox="0 0 18 17"><rect x="3.500" y="3.500" width="11" height="10" fill="none" stroke="#e8e8e8" stroke-width="1.100"></rect><path d="M5 5h3L5 8zM13 5v3L10 5zM5 12V9l3 3zM13 12h-3l3-3z" fill="#e8e8e8"></path></svg></div>
<div class="btn" style="left:69.3px;top:20.5px;width:16.5px;height:16.5px;"><svg viewBox="0 0 18 17"><circle cx="8" cy="7.500" r="4" fill="none" stroke="#e8e8e8" stroke-width="1.400"></circle><path d="M11 10.500l3.500 3.500" stroke="#e8e8e8" stroke-width="2"></path><path d="M6 7.500h4" stroke="#e8e8e8" stroke-width="1.100"></path></svg></div>
<div class="sep" style="left:90.5px;top:24px;height:9px"></div>
<div class="btn" style="left:95px;top:20.5px;width:16.8px;height:16.5px;"><svg viewBox="0 0 18 17"><path d="M6.500 3.800A5.500 5.500 0 1 1 3.800 7" fill="none" stroke="#e8e8e8" stroke-width="1.700"></path><path d="M3 2.500l4.500.5-2.500 3.500z" fill="#e8e8e8"></path><rect x="6.300" y="6.300" width="5.400" height="4.400" fill="#e8e8e8" transform="rotate(-25 9 8.500)"></rect></svg></div>
<div class="btn" style="left:115.2px;top:20.5px;width:16.5px;height:16.5px;background:#1e1e1e;border-color:#555;"><svg viewBox="0 0 18 17"><rect x="5.500" y="5.500" width="7" height="6" fill="#e8e8e8"></rect><path d="M3.500 6V3.500H6M12 3.500h2.500V6M14.500 11v2.500H12M6 13.500H3.500V11" fill="none" stroke="#e8e8e8" stroke-width="1.400"></path></svg></div>
<div class="btn" style="left:135.4px;top:20.5px;width:16.6px;height:16.5px;"><svg viewBox="0 0 18 17"><path d="M11.500 3.800A5.500 5.500 0 1 0 14.200 7" fill="none" stroke="#e8e8e8" stroke-width="1.700"></path><path d="M15 2.500l-4.500.5 2.500 3.500z" fill="#e8e8e8"></path><rect x="6.300" y="6.300" width="5.400" height="4.400" fill="#e8e8e8" transform="rotate(25 9 8.500)"></rect></svg></div>
<div class="sep" style="left:156.8px;top:24px;height:9px"></div>
<div class="btn" style="left:161.3px;top:20.5px;width:16.5px;height:16.5px;"><svg viewBox="0 0 18 17"><path d="M4 13.500V8h4v5.500zM10 13.500V5h4v8.500z" fill="#e8e8e8"></path><path d="M6 6c0-3 6-3 6-1.500" fill="none" stroke="#e8e8e8" stroke-width="1"></path></svg></div>
<div class="a" style="left:1px;top:39px;width:261px;height:40.500px;background:#454343"></div>
<div class="a" style="left:106.500px;top:40px;width:51.500px;height:39.500px;background:#fff;border:1.200px solid #d81818"></div>
<svg class="a" style="left:107.500px;top:41px;width:49.500px;height:37.500px" viewBox="181 87.500 560 419.500"><g fill="none" stroke="#98a4bc" stroke-width="6"><ellipse cx="366" cy="265" rx="101" ry="81"></ellipse><path d="M303 340C270 355 260 385 300 380M296 385L293 440M396 343L455 332C462 340 450 355 416 363L404 447"></path><path d="M397 185L406 168"></path></g><ellipse cx="404" cy="148" rx="12" ry="22" fill="#5a9a66"></ellipse><g stroke="#777" stroke-width="6" stroke-dasharray="14 5"><path d="M545 108L728 122M553 158L684 164"></path></g></svg>
<div class="hdr" style="left:0;top:82.7px;width:262px"><div class="c"><span style="transform: scaleX(0.842); transform-origin: 50% 50%;">Layer</span></div><svg class="a" style="right:11.500px;top:2.500px;width:9px;height:9px" viewBox="0 0 9 9"><path d="M5.500 2H1.500v5.500h5.500V4" fill="none" stroke="#aaa" stroke-width="1"></path><path d="M4 5l4-4M5.500 .800h2.700v2.700" fill="none" stroke="#aaa" stroke-width="1"></path></svg><svg class="a" style="right:-1.500px;top:3.500px;width:8px;height:8px" viewBox="0 0 8 8"><path d="M1 1l6 6M7 1l-6 6" stroke="#e8e8e8" stroke-width="2"></path></svg></div>
<div class="t" style="left: 4.5px; top: 104px; font-size: 9px; color: rgb(216, 216, 216); transform: scaleX(0.915); transform-origin: 0px 50%;">Opacity</div>
<div class="a" style="left:71px;top:104px;width:154.500px;height:11px;background:linear-gradient(90deg,#7ec6fa,#58a4e4 60%,#4a90cc)"></div>
<div class="t" style="left: 230.5px; top: 104px; font-size: 9px; color: rgb(216, 216, 216); transform: scaleX(0.855); transform-origin: 0px 50%;">100 %</div>
<div class="t" style="left: 4.5px; top: 122.5px; font-size: 9px; color: rgb(216, 216, 216); transform: scaleX(0.857); transform-origin: 0px 50%;">Blending</div>
<div class="a" style="left:72px;top:120px;width:190px;height:16px;background:#464646;border-radius:2px"></div>
<div class="t" style="left: 74.5px; top: 122.5px; font-size: 9px; color: rgb(216, 216, 216); transform: scaleX(0.854); transform-origin: 0px 50%;">Normal</div>
<div class="a" style="left:253px;top:126px;border:3px solid transparent;border-top:3.500px solid #aaa;border-bottom:0"></div>
<div class="a" style="left:7.500px;top:144.500px;width:8px;height:8px;border:1px solid #4a4a4a"></div>
<div class="t" style="left: 19px; top: 142.5px; font-size: 9px; color: rgb(140, 140, 140); transform: scaleX(0.904); transform-origin: 0px 50%;">Protect Alpha</div>
<div class="a" style="left:94.500px;top:144.500px;width:8px;height:8px;border:1px solid #4a4a4a"></div>
<div class="t" style="left: 106.5px; top: 142.5px; font-size: 9px; color: rgb(140, 140, 140); transform: scaleX(0.864); transform-origin: 0px 50%;">Clipping</div>
<div class="a" style="left:180px;top:144px;width:9px;height:9px;border:1px solid #d8d8d8;border-radius:1px"></div>
<div class="t" style="left: 192.5px; top: 142.5px; font-size: 9px; color: rgb(240, 240, 240); transform: scaleX(0.894); transform-origin: 0px 50%;">Lock</div>
<div class="a" style="left:2.500px;top:158.500px;width:246px;height:93px;background:#454343"></div>
<div class="a" style="left:2.500px;top:158.800px;width:14.500px;height:28.400px;background:#5c5c5c"></div>
<div class="a" style="left:5.200px;top:169.500px;width:7px;height:7px;border-radius:4px;background:#e6e6e6"></div>
<div class="a" style="left:17px;top:158.800px;width:231.500px;height:28.400px;background:#4d97d3;border-bottom:1px solid #2a4e70"></div>
<div class="a" style="left:27.500px;top:164.500px;width:27.500px;height:19px;background:#fff conic-gradient(#d4d4d4 25%,#fff 0 50%,#d4d4d4 0 75%,#fff 0) 0 0/5px 5px;box-shadow:0 0 0 .5px #9ab"></div>
<svg class="a" style="left:27.500px;top:164.500px;width:27.500px;height:19px" viewBox="0 0 27.500 19"><path d="M9 3c3 1 4 5 3 8M16 2h8" stroke="#888" stroke-width=".6" fill="none"></path></svg>
<div class="t" style="left: 66.5px; top: 168px; font-size: 10px; color: rgb(255, 255, 255); font-weight: bold; font-family: &quot;DejaVu Sans&quot;, sans-serif; transform: scaleX(0.894); transform-origin: 0px 50%;">Layer1</div>
<div class="t" style="left: 215.5px; top: 175.5px; font-size: 7px; color: rgb(232, 240, 255); line-height: 9px; transform: scaleX(0.996); transform-origin: 0px 50%;">8</div>
<div class="a" style="left:221px;top:177.500px;width:8.500px;height:8px;background:#000"></div>
<svg class="a" style="left:231.500px;top:165.500px;width:15px;height:15px" viewBox="0 0 20 20"><path d="M15.98 8.36L18.34 8.34L18.34 11.66L15.98 11.64L15.39 13.07L17.07 14.72L14.72 17.07L13.07 15.39L11.64 15.98L11.66 18.34L8.34 18.34L8.36 15.98L6.93 15.39L5.28 17.07L2.93 14.72L4.61 13.07L4.02 11.64L1.66 11.66L1.66 8.34L4.02 8.36L4.61 6.93L2.93 5.28L5.28 2.93L6.93 4.61L8.36 4.02L8.34 1.66L11.66 1.66L11.64 4.02L13.07 4.61L14.72 2.93L17.07 5.28L15.39 6.93ZM7.80 10.00a2.20 2.20 0 1 0 4.40 0a2.20 2.20 0 1 0 -4.40 0Z" fill="#fff" fill-rule="evenodd"></path></svg>
<div class="a" style="left:249px;top:158.500px;width:13px;height:93px;background:#2c2c2c"></div>
<div class="a" style="left:252.500px;top:160px;border:3px solid transparent;border-bottom:4.500px solid #bbb;border-top:0"></div>
<div class="a" style="left:252.500px;top:245px;border:3px solid transparent;border-top:4.500px solid #bbb;border-bottom:0"></div>
<div class="a" style="left:249.500px;top:167px;width:14px;height:75px;border-radius:5px;background:linear-gradient(90deg,#7a7a7a,#6c6c6c)"></div>
<div class="btn" style="left:5px;top:254.3px;width:17.2px;height:17px;"><svg viewBox="0 0 18 17"><path d="M5 3h6l2.500 2.500V14H5z" fill="none" stroke="#e8e8e8" stroke-width="1.200"></path></svg></div>
<div class="btn" style="left:25px;top:254.3px;width:17.2px;height:17px;"><svg viewBox="0 0 18 17"><path d="M5 3h6l2.500 2.500V14H5z" fill="none" stroke="#e8e8e8" stroke-width="1.200"></path><text x="7" y="12" font-size="7" font-weight="bold" fill="#e8e8e8" font-family="Liberation Sans,sans-serif">8</text></svg></div>
<div class="btn" style="left:45px;top:254.3px;width:17.2px;height:17px;"><svg viewBox="0 0 18 17"><path d="M5 3h6l2.500 2.500V14H5z" fill="none" stroke="#e8e8e8" stroke-width="1.200"></path><text x="7.200" y="12" font-size="7" font-weight="bold" fill="#e8e8e8" font-family="Liberation Sans,sans-serif">1</text></svg></div>
<div class="btn" style="left:66px;top:254.3px;width:22px;height:17px;"><svg viewBox="0 0 22 17"><path d="M4 3h5l2 2V12.500H4z" fill="none" stroke="#e8e8e8" stroke-width="1.100"></path><path d="M7.500 11.500h5M10 9v5" stroke="#e8e8e8" stroke-width="1.500"></path><path d="M14.500 7.500h5l-2.500 3z" fill="#e8e8e8"></path></svg></div>
<div class="btn" style="left:91px;top:254.3px;width:17.2px;height:17px;"><svg viewBox="0 0 18 17"><path d="M3.500 4.500h4l1 1.300h6V13.500H3.500z" fill="#e8e8e8"></path></svg></div>
<div class="sep" style="left:112.5px;top:258px;height:9px"></div>
<div class="btn" style="left:117px;top:254.3px;width:17.2px;height:17px;"><svg viewBox="0 0 18 17"><rect x="4" y="6" width="7.500" height="7.500" fill="none" stroke="#e8e8e8" stroke-width="1.100"></rect><path d="M6.500 5.500V3.500h7.500v7.500h-2" fill="none" stroke="#e8e8e8" stroke-width="1.100"></path></svg></div>
<div class="btn" style="left:137px;top:254.3px;width:17.2px;height:17px;background:#242424;border-color:#585858;"><svg viewBox="0 0 18 17"><rect x="3.500" y="3" width="4" height="4" fill="#e8e8e8"></rect><rect x="3.500" y="10" width="4" height="4" fill="#e8e8e8"></rect><rect x="11" y="6.500" width="4" height="4" fill="#e8e8e8"></rect><path d="M7.500 5h2v7h-2M9.500 8.500H11" fill="none" stroke="#e8e8e8" stroke-width="1"></path></svg></div>
<div class="sep" style="left:158px;top:258px;height:9px"></div>
<div class="btn" style="left:162.3px;top:254.3px;width:17.6px;height:17px;background:#242424;border-color:#585858;"><svg viewBox="0 0 18 17"><path d="M4.500 5.500h9M7 5.500V4h4v1.500" fill="none" stroke="#e8e8e8" stroke-width="1.300"></path><path d="M5.500 6.500h7l-.5 7.500h-6z" fill="none" stroke="#e8e8e8" stroke-width="1.200"></path><path d="M7.500 8v4.500M9 8v4.500M10.500 8v4.500" stroke="#e8e8e8" stroke-width="1"></path></svg></div>
<div class="hdr" style="left:0;top:279.1px;width:262px"><div class="c"><span style="transform: scaleX(0.921); transform-origin: 50% 50%;">Reference</span></div><svg class="a" style="right:11.500px;top:2.500px;width:9px;height:9px" viewBox="0 0 9 9"><path d="M5.500 2H1.500v5.500h5.500V4" fill="none" stroke="#aaa" stroke-width="1"></path><path d="M4 5l4-4M5.500 .800h2.700v2.700" fill="none" stroke="#aaa" stroke-width="1"></path></svg><svg class="a" style="right:-1.500px;top:3.500px;width:8px;height:8px" viewBox="0 0 8 8"><path d="M1 1l6 6M7 1l-6 6" stroke="#e8e8e8" stroke-width="2"></path></svg></div>
<div class="a" style="left:0;top:297px;width:262px;height:20px;background:#262626"></div>
<div class="btn" style="left:3.6px;top:297.8px;width:17.2px;height:17.4px;background:#505050;"><svg viewBox="0 0 18 17"><path d="M5 9.500a2.400 2.400 0 0 1 .3-4.800 3.300 3.300 0 0 1 6.400-.4 2.600 2.600 0 0 1 .6 5.200z" fill="#e8e8e8"></path><path d="M9 14.500V8.500M6.500 11L9 8.500l2.500 2.500" stroke="#e8e8e8" stroke-width="1.800" fill="none"></path></svg></div>
<div class="btn" style="left:23.8px;top:297.8px;width:17px;height:17.4px;"><svg viewBox="0 0 18 17"><path d="M3.500 4.500h4l1 1.300h5V8H6l-2.500 5.500z" fill="#e8e8e8"></path><path d="M6.500 8.500h8.500l-2.500 5H4z" fill="#e8e8e8"></path></svg></div>
<div class="btn" style="left:44.3px;top:297.8px;width:16.6px;height:17.4px;background:#242424;border-color:#585858;"><svg viewBox="0 0 18 17"><path d="M6 5.500l6 6M12 5.500l-6 6" stroke="#e8e8e8" stroke-width="1.600"></path></svg></div>
<div class="sep" style="left:64.5px;top:301.5px;height:9px"></div>
<div class="btn" style="left:68.8px;top:297.8px;width:17.4px;height:17.4px;background:#242424;border-color:#585858;"><svg viewBox="0 0 18 17"><circle cx="8" cy="7.500" r="4" fill="none" stroke="#e8e8e8" stroke-width="1.400"></circle><path d="M11 10.500l3.500 3.500" stroke="#e8e8e8" stroke-width="2"></path><path d="M6 7.500h4M8 5.500v4" stroke="#e8e8e8" stroke-width="1.100"></path></svg></div>
<div class="btn" style="left:89.3px;top:297.8px;width:17px;height:17.4px;background:#242424;border-color:#585858;"><svg viewBox="0 0 18 17"><rect x="3.500" y="3.500" width="11" height="10" fill="none" stroke="#e8e8e8" stroke-width="1.100"></rect><path d="M5 5h3L5 8zM13 5v3L10 5zM5 12V9l3 3zM13 12h-3l3-3z" fill="#e8e8e8"></path></svg></div>
<div class="btn" style="left:109.6px;top:297.8px;width:17.2px;height:17.4px;background:#242424;border-color:#585858;"><svg viewBox="0 0 18 17"><circle cx="8" cy="7.500" r="4" fill="none" stroke="#e8e8e8" stroke-width="1.400"></circle><path d="M11 10.500l3.500 3.500" stroke="#e8e8e8" stroke-width="2"></path><path d="M6 7.500h4" stroke="#e8e8e8" stroke-width="1.100"></path></svg></div>
<div class="sep" style="left:130.8px;top:301.5px;height:9px"></div>
<div class="btn" style="left:135px;top:297.8px;width:17px;height:17.4px;background:#242424;border-color:#585858;"><svg viewBox="0 0 18 17"><path d="M4.500 13.500l1-2.800 5-5 1.800 1.800-5 5z" fill="none" stroke="#e8e8e8" stroke-width="1.200"></path><path d="M10 5l3 3M11.500 6.500l2-2c.9-.9 1.800 0 .9.900L12.500 7.500" stroke="#e8e8e8" stroke-width="1.800" fill="none"></path></svg></div>
<div class="btn on" style="left:155px;top:297.8px;width:18px;height:17.4px;"><svg viewBox="0 0 18 17"><g stroke="#fff" stroke-width="1.800" stroke-linecap="round"><path d="M6.500 9L5.700 4.800M8.600 8.500L8.300 3.300M10.700 8.700L11.200 4M12.400 9.500L13.400 6M6 11.800L3.800 9.300"></path></g><path d="M5.600 8.500L13.200 9L12.700 12.700C11.800 14.800 8.200 15.200 6.800 13.800L5 11.300z" fill="#fff"></path></svg></div>
<div class="sep" style="left:177px;top:301.5px;height:9px"></div>
<div class="btn" style="left:181.5px;top:297.8px;width:16.6px;height:17.4px;background:#242424;border-color:#585858;"><svg viewBox="0 0 18 17"><path d="M6.500 3.800A5.500 5.500 0 1 1 3.800 7" fill="none" stroke="#e8e8e8" stroke-width="1.700"></path><path d="M3 2.500l4.500.5-2.500 3.500z" fill="#e8e8e8"></path><rect x="6.300" y="6.300" width="5.400" height="4.400" fill="#e8e8e8" transform="rotate(-25 9 8.500)"></rect></svg></div>
<div class="btn" style="left:201.6px;top:297.8px;width:17px;height:17.4px;background:#242424;border-color:#585858;"><svg viewBox="0 0 18 17"><rect x="5.500" y="5.500" width="7" height="6" fill="#e8e8e8"></rect><path d="M3.500 6V3.500H6M12 3.500h2.500V6M14.500 11v2.500H12M6 13.500H3.500V11" fill="none" stroke="#e8e8e8" stroke-width="1.400"></path></svg></div>
<div class="btn" style="left:221.8px;top:297.8px;width:17.2px;height:17.4px;background:#242424;border-color:#585858;"><svg viewBox="0 0 18 17"><path d="M11.500 3.800A5.500 5.500 0 1 0 14.200 7" fill="none" stroke="#e8e8e8" stroke-width="1.700"></path><path d="M15 2.500l-4.500.5 2.500 3.500z" fill="#e8e8e8"></path><rect x="6.300" y="6.300" width="5.400" height="4.400" fill="#e8e8e8" transform="rotate(25 9 8.500)"></rect></svg></div>
<div class="sep" style="left:242.5px;top:301.5px;height:9px"></div>
<div class="btn" style="left:257px;top:297.8px;width:17px;height:17.4px;"></div>
<div class="a" style="left:0;top:317.700px;width:262px;height:6.500px;background:#fff conic-gradient(#dcdcdc 25%,#fff 0 50%,#dcdcdc 0 75%,#fff 0) 0 0/6.400px 6.400px"></div>
<div class="hdr" style="left:0;top:327.3px;width:262px"><div class="c"><span style="transform: scaleX(0.893); transform-origin: 50% 50%;">Brush Size</span></div><svg class="a" style="right:11.500px;top:2.500px;width:9px;height:9px" viewBox="0 0 9 9"><path d="M5.500 2H1.500v5.500h5.500V4" fill="none" stroke="#aaa" stroke-width="1"></path><path d="M4 5l4-4M5.500 .800h2.700v2.700" fill="none" stroke="#aaa" stroke-width="1"></path></svg><svg class="a" style="right:-1.500px;top:3.500px;width:8px;height:8px" viewBox="0 0 8 8"><path d="M1 1l6 6M7 1l-6 6" stroke="#e8e8e8" stroke-width="2"></path></svg></div>
<div class="a" style="left:0;top:344.500px;width:250px;height:131px;background:#454343"></div>
<div class="a" style="left:1.2px;top:344px;width:29.200px;height:36.200px;background:#555"><div class="a" style="left:14.95px;top:14.65px;width:0.7px;height:0.7px;border-radius:50%;background:#ececec"></div><div class="a" style="left:0;width:29.200px;top:27.5px;text-align:center;line-height:10px"><span style="display: inline-block; font-size: 7.6px; color: rgb(240, 240, 240); white-space: nowrap; transform: scaleX(0.642); transform-origin: 50% 50%;">1</span></div></div>
<div class="a" style="left:31.15px;top:344px;width:29.200px;height:36.200px;background:#555"><div class="a" style="left:14.8px;top:14.5px;width:1px;height:1px;border-radius:50%;background:#ececec"></div><div class="a" style="left:0;width:29.200px;top:27.5px;text-align:center;line-height:10px"><span style="display: inline-block; font-size: 7.6px; color: rgb(240, 240, 240); white-space: nowrap; transform: scaleX(0.782); transform-origin: 50% 50%;">1.5</span></div></div>
<div class="a" style="left:61.1px;top:344px;width:29.200px;height:36.200px;background:#555"><div class="a" style="left:14.6px;top:14.3px;width:1.4px;height:1.4px;border-radius:50%;background:#ececec"></div><div class="a" style="left:0;width:29.200px;top:27.5px;text-align:center;line-height:10px"><span style="display: inline-block; font-size: 7.6px; color: rgb(240, 240, 240); white-space: nowrap; transform: scaleX(0.963); transform-origin: 50% 50%;">2</span></div></div>
<div class="a" style="left:91.05px;top:344px;width:29.200px;height:36.200px;background:#555"><div class="a" style="left:14.3px;top:14px;width:2px;height:2px;border-radius:50%;background:#ececec"></div><div class="a" style="left:0;width:29.200px;top:27.5px;text-align:center;line-height:10px"><span style="display: inline-block; font-size: 7.6px; color: rgb(240, 240, 240); white-space: nowrap; transform: scaleX(0.963); transform-origin: 50% 50%;">3</span></div></div>
<div class="a" style="left:121px;top:344px;width:29.200px;height:36.200px;background:#555"><div class="a" style="left:13.8px;top:13.5px;width:3px;height:3px;border-radius:50%;background:#ececec"></div><div class="a" style="left:0;width:29.200px;top:27.5px;text-align:center;line-height:10px"><span style="display: inline-block; font-size: 7.6px; color: rgb(240, 240, 240); white-space: nowrap; transform: scaleX(0.963); transform-origin: 50% 50%;">4</span></div></div>
<div class="a" style="left:150.95px;top:344px;width:29.200px;height:36.200px;background:#555"><div class="a" style="left:13.4px;top:13.1px;width:3.8px;height:3.8px;border-radius:50%;background:#ececec"></div><div class="a" style="left:0;width:29.200px;top:27.5px;text-align:center;line-height:10px"><span style="display: inline-block; font-size: 7.6px; color: rgb(240, 240, 240); white-space: nowrap; transform: scaleX(0.963); transform-origin: 50% 50%;">5</span></div></div>
<div class="a" style="left:180.9px;top:344px;width:29.200px;height:36.200px;background:#555"><div class="a" style="left:12.6px;top:12.3px;width:5.4px;height:5.4px;border-radius:50%;background:#ececec"></div><div class="a" style="left:0;width:29.200px;top:27.5px;text-align:center;line-height:10px"><span style="display: inline-block; font-size: 7.6px; color: rgb(240, 240, 240); white-space: nowrap; transform: scaleX(0.963); transform-origin: 50% 50%;">7</span></div></div>
<div class="a" style="left:210.85px;top:344px;width:29.200px;height:36.200px;background:#555"><div class="a" style="left:11.3px;top:11px;width:8px;height:8px;border-radius:50%;background:#ececec"></div><div class="a" style="left:0;width:29.200px;top:27.5px;text-align:center;line-height:10px"><span style="display: inline-block; font-size: 7.6px; color: rgb(240, 240, 240); white-space: nowrap; transform: scaleX(0.977); transform-origin: 50% 50%;">10</span></div></div>
<div class="a" style="left:1.2px;top:381px;width:29.200px;height:36.200px;background:#555"><div class="a" style="left:10.8px;top:10.7px;width:9px;height:9px;border-radius:50%;background:#ececec"></div><div class="a" style="left:0;width:29.200px;top:28.3px;text-align:center;line-height:10px"><span style="display: inline-block; font-size: 7.6px; color: rgb(240, 240, 240); white-space: nowrap; transform: scaleX(0.977); transform-origin: 50% 50%;">12</span></div></div>
<div class="a" style="left:31.15px;top:381px;width:29.200px;height:36.200px;background:#555"><div class="a" style="left:9.7px;top:9.6px;width:11.2px;height:11.2px;border-radius:50%;background:#ececec"></div><div class="a" style="left:0;width:29.200px;top:28.3px;text-align:center;line-height:10px"><span style="display: inline-block; font-size: 7.6px; color: rgb(240, 240, 240); white-space: nowrap; transform: scaleX(0.977); transform-origin: 50% 50%;">15</span></div></div>
<div class="a" style="left:61.1px;top:381px;width:29.200px;height:36.200px;background:#555"><div class="a" style="left:7.55px;top:7.45px;width:15.5px;height:15.5px;border-radius:50%;background:#ececec"></div><div class="a" style="left:0;width:29.200px;top:28.3px;text-align:center;line-height:10px"><span style="display: inline-block; font-size: 7.6px; color: rgb(240, 240, 240); white-space: nowrap; transform: scaleX(0.977); transform-origin: 50% 50%;">20</span></div></div>
<div class="a" style="left:91.05px;top:381px;width:29.200px;height:36.200px;background:#555"><div class="a" style="left:6.2px;top:6.1px;width:18.2px;height:18.2px;border-radius:50%;background:#ececec"></div><div class="a" style="left:0;width:29.200px;top:28.3px;text-align:center;line-height:10px"><span style="display: inline-block; font-size: 7.6px; color: rgb(240, 240, 240); white-space: nowrap; transform: scaleX(0.977); transform-origin: 50% 50%;">25</span></div></div>
<div class="a" style="left:121px;top:381px;width:29.200px;height:36.200px;background:#555"><div class="a" style="left:6.2px;top:6.1px;width:18.2px;height:18.2px;border-radius:50%;background:#ececec"></div><div class="a" style="left:0;width:29.200px;top:28.3px;text-align:center;line-height:10px"><span style="display: inline-block; font-size: 7.6px; color: rgb(240, 240, 240); white-space: nowrap; transform: scaleX(0.977); transform-origin: 50% 50%;">30</span></div></div>
<div class="a" style="left:150.95px;top:381px;width:29.200px;height:36.200px;background:#555"><div class="a" style="left:6.2px;top:6.1px;width:18.2px;height:18.2px;border-radius:50%;background:#ececec"></div><div class="a" style="left:0;width:29.200px;top:28.3px;text-align:center;line-height:10px"><span style="display: inline-block; font-size: 7.6px; color: rgb(240, 240, 240); white-space: nowrap; transform: scaleX(0.977); transform-origin: 50% 50%;">40</span></div></div>
<div class="a" style="left:180.9px;top:381px;width:29.200px;height:36.200px;background:#555"><div class="a" style="left:6.2px;top:6.1px;width:18.2px;height:18.2px;border-radius:50%;background:#ececec"></div><div class="a" style="left:0;width:29.200px;top:28.3px;text-align:center;line-height:10px"><span style="display: inline-block; font-size: 7.6px; color: rgb(240, 240, 240); white-space: nowrap; transform: scaleX(0.977); transform-origin: 50% 50%;">50</span></div></div>
<div class="a" style="left:210.85px;top:381px;width:29.200px;height:36.200px;background:#555"><div class="a" style="left:6.2px;top:6.1px;width:18.2px;height:18.2px;border-radius:50%;background:#ececec"></div><div class="a" style="left:0;width:29.200px;top:28.3px;text-align:center;line-height:10px"><span style="display: inline-block; font-size: 7.6px; color: rgb(240, 240, 240); white-space: nowrap; transform: scaleX(0.977); transform-origin: 50% 50%;">70</span></div></div>
<div class="a" style="left:1.2px;top:418px;width:29.200px;height:36.200px;background:#555"><div class="a" style="left:6.2px;top:6.5px;width:18.2px;height:18.2px;border-radius:50%;background:#ececec"></div><div class="a" style="left:0;width:29.200px;top:28.2px;text-align:center;line-height:10px"><span style="display: inline-block; font-size: 7.6px; color: rgb(240, 240, 240); white-space: nowrap; transform: scaleX(0.958); transform-origin: 50% 50%;">100</span></div></div>
<div class="a" style="left:31.15px;top:418px;width:29.200px;height:36.200px;background:#555"><div class="a" style="left:6.2px;top:6.5px;width:18.2px;height:18.2px;border-radius:50%;background:#ececec"></div><div class="a" style="left:0;width:29.200px;top:28.2px;text-align:center;line-height:10px"><span style="display: inline-block; font-size: 7.6px; color: rgb(240, 240, 240); white-space: nowrap; transform: scaleX(0.958); transform-origin: 50% 50%;">150</span></div></div>
<div class="a" style="left:61.1px;top:418px;width:29.200px;height:36.200px;background:#555"><div class="a" style="left:6.2px;top:6.5px;width:18.2px;height:18.2px;border-radius:50%;background:#ececec"></div><div class="a" style="left:0;width:29.200px;top:28.2px;text-align:center;line-height:10px"><span style="display: inline-block; font-size: 7.6px; color: rgb(240, 240, 240); white-space: nowrap; transform: scaleX(0.958); transform-origin: 50% 50%;">200</span></div></div>
<div class="a" style="left:91.05px;top:418px;width:29.200px;height:36.200px;background:#555"><div class="a" style="left:6.2px;top:6.5px;width:18.2px;height:18.2px;border-radius:50%;background:#ececec"></div><div class="a" style="left:0;width:29.200px;top:28.2px;text-align:center;line-height:10px"><span style="display: inline-block; font-size: 7.6px; color: rgb(240, 240, 240); white-space: nowrap; transform: scaleX(0.958); transform-origin: 50% 50%;">300</span></div></div>
<div class="a" style="left:121px;top:418px;width:29.200px;height:36.200px;background:#555"><div class="a" style="left:6.2px;top:6.5px;width:18.2px;height:18.2px;border-radius:50%;background:#ececec"></div><div class="a" style="left:0;width:29.200px;top:28.2px;text-align:center;line-height:10px"><span style="display: inline-block; font-size: 7.6px; color: rgb(240, 240, 240); white-space: nowrap; transform: scaleX(0.958); transform-origin: 50% 50%;">400</span></div></div>
<div class="a" style="left:150.95px;top:418px;width:29.200px;height:36.200px;background:#555"><div class="a" style="left:6.2px;top:6.5px;width:18.2px;height:18.2px;border-radius:50%;background:#ececec"></div><div class="a" style="left:0;width:29.200px;top:28.2px;text-align:center;line-height:10px"><span style="display: inline-block; font-size: 7.6px; color: rgb(240, 240, 240); white-space: nowrap; transform: scaleX(0.958); transform-origin: 50% 50%;">500</span></div></div>
<div class="a" style="left:180.9px;top:418px;width:29.200px;height:36.200px;background:#555"><div class="a" style="left:6.2px;top:6.5px;width:18.2px;height:18.2px;border-radius:50%;background:#ececec"></div><div class="a" style="left:0;width:29.200px;top:28.2px;text-align:center;line-height:10px"><span style="display: inline-block; font-size: 7.6px; color: rgb(240, 240, 240); white-space: nowrap; transform: scaleX(0.958); transform-origin: 50% 50%;">700</span></div></div>
<div class="a" style="left:210.85px;top:418px;width:29.200px;height:36.200px;background:#555"><div class="a" style="left:6.2px;top:6.5px;width:18.2px;height:18.2px;border-radius:50%;background:#ececec"></div><div class="a" style="left:0;width:29.200px;top:28.2px;text-align:center;line-height:10px"><span style="display: inline-block; font-size: 7.6px; color: rgb(240, 240, 240); white-space: nowrap; transform: scaleX(0.949); transform-origin: 50% 50%;">1000</span></div></div>
<div class="a" style="left:250px;top:344.500px;width:12px;height:131px;background:#2a2a2a"></div>
<div class="a" style="left:253px;top:346px;border:3px solid transparent;border-bottom:4.500px solid #bbb;border-top:0"></div>
<div class="a" style="left:253px;top:469px;border:3px solid transparent;border-top:4.500px solid #bbb;border-bottom:0"></div>
<div class="a" style="left:250.500px;top:353px;width:14px;height:113px;border-radius:5px;background:linear-gradient(90deg,#7a7a7a,#6c6c6c)"></div>
</div>

<div id="status" class="a" style="left:0;top:535px;width:1024px;height:14px;background:#232323">
<div class="t" style="left: 7px; top: 0.5px; font-size: 9.3px; color: rgb(218, 218, 218); transform: scaleX(0.853); transform-origin: 0px 50%;">1600 * 1200 pixel</div>
<div class="t" style="left: 77.5px; top: 0.5px; font-size: 9.3px; color: rgb(218, 218, 218); transform: scaleX(0.906); transform-origin: 0px 50%;">(11.6 * 8.7cm)</div>
<div class="t" style="left: 137.5px; top: 0.5px; font-size: 9.3px; color: rgb(218, 218, 218); transform: scaleX(0.934); transform-origin: 0px 50%;">350 dpi</div>
<div class="t" style="left: 174px; top: 0.5px; font-size: 9.3px; color: rgb(218, 218, 218); transform: scaleX(0.871); transform-origin: 0px 50%;">46 %</div>
<div class="t" style="left: 201px; top: 0.5px; font-size: 9.3px; color: rgb(218, 218, 218); transform: scaleX(0.866); transform-origin: 0px 50%;">( 484, 836 )</div>
<div class="t" style="left: 249px; top: 0.5px; font-size: 9.3px; color: rgb(218, 218, 218); transform: scaleX(0.943); transform-origin: 0px 50%;">Draw a straight line by holding down Shift, Change a brush size by holding down Ctrl, Alt, and dragging</div>
</div>
<div id="task" class="a" style="left:0;top:548.500px;width:1024px;height:30px;overflow:hidden;background:radial-gradient(ellipse 130px 22px at 110px 16px,#1a2560,rgba(20,28,80,0) 100%),radial-gradient(ellipse 160px 20px at 480px 12px,#161d50,rgba(20,28,80,0) 100%),radial-gradient(ellipse 140px 20px at 830px 10px,#18205a,rgba(20,28,80,0) 100%),linear-gradient(#0e1030,#0b0c26);border-top:1px solid #5a6284">
<div class="a" style="left:0;top:-1px;width:2.500px;height:31px;background:#2e2e2e"></div>
<div class="a" style="left:9.200px;top:0.500px;width:27.800px;height:27.800px;border-radius:50%;background:radial-gradient(circle at 50% 95%,#38c8f0 0,#1a78c8 35%,#0e4a8a 60%,#123868 100%);box-shadow:0 0 2px 1px rgba(120,190,255,.55),inset 0 0 2px 1px rgba(190,230,255,.7)"></div>
<svg class="a" style="left:9.200px;top:0.500px;width:27.800px;height:27.800px" viewBox="0 0 28 28"><g transform="translate(14 14.500) scale(1.280) translate(-13.200 -14.400)"><path d="M7.500 8.500c2-1.200 4-1 5.800 0L12 13.500c-1.800-1-3.800-1.200-5.800 0z" fill="#f2652a"></path><path d="M14.600 9c2 1 4 1.200 6 0l-1.400 5c-2 1.200-4 1-6 0z" fill="#8cc63f"></path><path d="M5.900 14.700c2-1.200 4-1 5.800 0l-1.400 5c-1.800-1-3.800-1.200-5.800 0z" fill="#2ea3f2"></path><path d="M12.900 15.200c2 1 4 1.200 6 0l-1.400 5c-2 1.200-4 1-6 0z" fill="#fdc70c"></path></g><ellipse cx="14" cy="7" rx="10" ry="5.500" fill="rgba(255,255,255,.22)"></ellipse></svg>
<div class="a" style="left:44.500px;top:4px;width:8px;height:22px;background:radial-gradient(circle,#2c3260 .6px,rgba(0,0,0,0) .9px) 0 0/2.600px 2.600px"></div>
<svg class="a" style="left:68px;top:1.200px;width:28px;height:26px" viewBox="68 551 28 26"><path d="M71.500 555L85.500 563.500L71.500 572.200z" fill="#6b2fc4"></path><path d="M92 555L82 563.500L92 572.200z" fill="#cbb4f2"></path></svg>
<svg class="a" style="left:114px;top:0;width:30px;height:30px" viewBox="114 549 30 30"><circle cx="128.200" cy="563.800" r="11.300" fill="#5cb65a" stroke="#eef6ee" stroke-width="1.200"></circle><path d="M128.200 563.800L131 551L140.500 553L139.500 560z" fill="#0e1030"></path><path d="M130.500 558.500L131.800 552.500L133.300 553L131.800 559z" fill="#f0902a"></path><path d="M133 560L137.800 553.500L139.300 554.800L134.300 561z" fill="#f0902a"></path><path d="M134.800 562.300L139.500 559.500L140 561.300L135.300 563.800z" fill="#f0902a"></path><circle cx="128" cy="563.800" r="4.400" fill="#5cb65a" stroke="#f4faf4" stroke-width="1.800"></circle></svg>
<div class="a" style="left:153px;top:0.500px;width:43.3px;height:28.500px;border-radius:2px;background:linear-gradient(#5c5e7c,#3a3c58 45%,#26283e 50%,#1a1b32);border:1px solid #64668a"></div>
<div class="a" style="left:199.2px;top:0.500px;width:43.6px;height:28.500px;border-radius:2px;background:linear-gradient(#8e90a6,#70728a 45%,#626480 50%,#8f91a8);border:1px solid #b4b6c8"></div>
<div class="a" style="left:246px;top:0.500px;width:43.3px;height:28.500px;border-radius:2px;background:linear-gradient(#5c5e7c,#3a3c58 45%,#26283e 50%,#1a1b32);border:1px solid #64668a"></div>
<div class="a" style="left:163.600px;top:3.400px;width:22.800px;height:22.800px;border-radius:50%;background:conic-gradient(from -60deg,#e8453c 0 120deg,#f8c11c 120deg 240deg,#34a853 240deg 360deg)"></div>
<div class="a" style="left:169.500px;top:9.300px;width:11px;height:11px;border-radius:50%;background:#4688f0;border:1.800px solid #f4f6fa"></div>
<div class="a" style="left:209px;top:2.600px;width:24px;height:24px;border-radius:4px;background:#f6f6f6"></div>
<svg class="a" style="left:209px;top:2.600px;width:24px;height:24px" viewBox="0 0 24 24"><defs><linearGradient id="mbg" x1="0.1" y1="0" x2="0.7" y2="1"><stop offset="0" stop-color="#e8352c"></stop><stop offset=".32" stop-color="#f08a22"></stop><stop offset=".55" stop-color="#46b85c"></stop><stop offset="1" stop-color="#12a0c4"></stop></linearGradient></defs><path d="M15.800 3.400C13 5.500 6 7 5.200 12.500A7 7 0 1 0 18.800 10C17.800 8.800 16.300 9.200 15.200 10.200C16.600 7.700 16.600 5.200 15.800 3.400Z" fill="url(#mbg)"></path></svg>
<svg class="a" style="left:252px;top:1px;width:32px;height:28px" viewBox="252 550 32 28"><path d="M256.500 568c-1-5 4-9.500 10.500-9.500s10.500 3.500 10 8-5 7-9 6.500c-2-.3-2-2-3.500-2.500s-3 .5-4.500 0-3-1-3.500-2.500z" fill="#dceaf8" stroke="#9ab4d0" stroke-width=".6"></path><circle cx="260.500" cy="564.500" r="1.700" fill="#e05a3a"></circle><circle cx="264.500" cy="561.200" r="1.700" fill="#7ab648"></circle><circle cx="269.500" cy="560.500" r="1.600" fill="#f0d040"></circle><circle cx="265.800" cy="566.800" r="1.700" fill="#2a4a9a"></circle><path d="M277.800 553.200L268 574.500" stroke="#d8904a" stroke-width="2" stroke-linecap="round"></path><path d="M278 552.800L276 557" stroke="#f0c890" stroke-width="2.600" stroke-linecap="round"></path></svg>
<div class="a" style="left:913px;top:5px;width:6px;height:22px;background:radial-gradient(circle,#3a4068 .6px,rgba(0,0,0,0) .9px) 0 0/2.600px 2.600px"></div>
<div class="t" style="left: 926px; top: 6.5px; font-size: 9.5px; color: rgb(240, 240, 240); transform: scaleX(0.975); transform-origin: 0px 50%;">EN</div>
<div class="a" style="left:949px;top:14px;border:3px solid transparent;border-bottom:4px solid #f0f0f0;border-top:0"></div>
<div class="t" style="left: 970px; top: 0.5px; font-size: 9.5px; color: rgb(244, 244, 244); transform: scaleX(0.929); transform-origin: 0px 50%;">8:08 PM</div>
<div class="t" style="left: 966.5px; top: 15px; font-size: 9.5px; color: rgb(244, 244, 244); transform: scaleX(0.89); transform-origin: 0px 50%;">6/25/2021</div>
<div class="a" style="left:1016px;top:-1px;width:9px;height:31px;background:linear-gradient(90deg,#5a5c70,#34364a);border:1px solid #787a90"></div>
</div>

<div class="a" style="left:0;top:578.5px;width:1024px;height:82.5px;overflow:hidden;background:#232323">
<div class="a" style="left:-3px;top:-479.2px;width:1030px;height:700px">
<div class="a" style="left:0;top:58px;width:29px;height:477px;background:#242424">
<div class="a" style="left:0;top:0;width:4px;height:477px;background:#1b1b1b"></div>
<div class="a" style="left:0;top:44px;width:3px;height:15px;background:#b4c6d6"></div>
<div class="a" style="left:0;top:78px;width:2px;height:27px;background:#2d4a66"></div>
<div class="btn on" style="left:6px;top:9px;width:20px;height:20px;"><svg viewBox="0 0 20 20"><path d="M15.500 4.500L9 11" stroke="#fff" stroke-width="2.200" stroke-linecap="round"></path><path d="M8.300 10.300c-1.500-.5-3 .3-3.200 2-.1 1-.8 1.600-1.600 1.800 2 1 5 .7 5.800-1.500z" fill="#fff"></path></svg></div>
<div class="btn" style="left:6px;top:32.5px;width:20px;height:20px;"><svg viewBox="0 0 20 20"><path d="M4.500 11.500L11 5l4.500 4.500L9 16H6.500z" fill="none" stroke="#eee" stroke-width="1.300"></path><path d="M5.500 11.500l3-3 4.500 4.500-3.500 3H7z" fill="#eee"></path></svg></div>
<div class="btn" style="left:6px;top:56px;width:20px;height:20px;"><svg viewBox="0 0 20 20"><rect x="5" y="5" width="10" height="10" fill="none" stroke="#ddd" stroke-width="1.500"></rect></svg></div>
<div class="btn" style="left:6px;top:79.5px;width:20px;height:20px;"><svg viewBox="0 0 20 20"><path d="M15.500 4.500L9.500 10.500" stroke="#eee" stroke-width="2.200" stroke-linecap="round"></path><path d="M4.500 9.500l2 2 2 2" stroke="#eee" stroke-width="1.800" stroke-dasharray="1.800 1.200"></path><rect x="3.800" y="8.500" width="2" height="2" fill="#eee"></rect><rect x="7.500" y="12.500" width="2" height="2" fill="#eee"></rect></svg></div>
<div class="a" style="left:12px;top:102.5px;width:8px;height:1.500px;background:#5a5a5a"></div>
<div class="btn" style="left:6px;top:108px;width:20px;height:20px;"><svg viewBox="0 0 20 20"><path d="M10 3.500v13M3.500 10h13" stroke="#eee" stroke-width="1.500"></path><path d="M10 2.500l2.500 3h-5zM10 17.500l2.500-3h-5zM2.500 10l3-2.500v5zM17.500 10l-3-2.500v5z" fill="#eee"></path></svg></div>
<div class="a" style="left:12px;top:131px;width:8px;height:1.500px;background:#5a5a5a"></div>
<div class="btn" style="left:6px;top:135.5px;width:20px;height:20px;"><svg viewBox="0 0 20 20"><rect x="5" y="5" width="10" height="10" fill="#e4e4e4"></rect></svg></div>
<div class="btn" style="left:6px;top:159px;width:20px;height:20px;"><svg viewBox="0 0 20 20"><path d="M5 9l5-4.500 5.500 5-5 5c-1.500 0-5.500-3-5.500-5.500z" fill="#eee"></path><path d="M7 7.500c-1-2-.5-4 1-4s2 2 2 3.500" fill="none" stroke="#eee" stroke-width="1"></path><path d="M15.800 10.500c.8 1.500 1.200 3 .4 4.500-.8-.8-1-3-.4-4.500z" fill="#eee"></path></svg></div>
<div class="btn" style="left:6px;top:182px;width:20px;height:20px;"><div style="position:absolute;left:1.500px;top:3px;right:1.500px;bottom:3.500px;border:1px solid #ddd;background:linear-gradient(135deg,#555,#eee)"></div></div>
<div class="a" style="left:12px;top:206.5px;width:8px;height:1.500px;background:#5a5a5a"></div>
<div class="btn" style="left:6px;top:211px;width:20px;height:20px;"><svg viewBox="0 0 20 20"><rect x="5" y="5" width="10" height="10" fill="none" stroke="#ddd" stroke-width="1.500" stroke-dasharray="2 1.500"></rect></svg></div>
<div class="btn" style="left:6px;top:234px;width:20px;height:20px;"><svg viewBox="0 0 20 20"><ellipse cx="10" cy="10" rx="7" ry="4.200" transform="rotate(-35 10 10)" fill="none" stroke="#bbb" stroke-width="1.300" stroke-dasharray="1.500 1.500"></ellipse></svg></div>
<div class="btn" style="left:6px;top:257.5px;width:20px;height:20px;"><svg viewBox="0 0 20 20"><path d="M4.500 15.500L11 9" stroke="#eee" stroke-width="2.200" stroke-linecap="round"></path><path d="M13 4v2M13 8.500v2M10 7h2M14.500 7h2M11 5l1 1M15.500 5l-1 1M15.500 9l-1-1" stroke="#eee" stroke-width="1"></path></svg></div>
<div class="btn" style="left:6px;top:281px;width:20px;height:20px;"><svg viewBox="0 0 20 20"><path d="M4.500 6v9h9" fill="none" stroke="#ccc" stroke-width="1.300" stroke-dasharray="1.500 1.500"></path><path d="M4.500 5h5" stroke="#ccc" stroke-width="1.300" stroke-dasharray="1.500 1.500"></path><path d="M15.500 4.500L9 11" stroke="#eee" stroke-width="2.200" stroke-linecap="round"></path><path d="M8.500 10.500l-1.500 3 3-1.500z" fill="#eee"></path></svg></div>
<div class="btn" style="left:6px;top:304px;width:20px;height:20px;"><svg viewBox="0 0 20 20"><path d="M4.500 7v8h9" fill="none" stroke="#ccc" stroke-width="1.300" stroke-dasharray="1.500 1.500"></path><path d="M8 9l4.500-4.500L16 8l-4.500 4.500H9.500z" fill="none" stroke="#eee" stroke-width="1.200"></path><path d="M8.500 9.500l2-2 3 3-2 2H10z" fill="#eee"></path></svg></div>
<div class="a" style="left:12px;top:327.5px;width:8px;height:1.500px;background:#5a5a5a"></div>
<div class="btn" style="left:6px;top:332px;width:20px;height:20px;"><div class="t" style="left:0;right:0;top:1px;text-align:center;font:bold 18px/18px 'Liberation Serif',serif;color:#f0f0f0">T</div></div>
<div class="btn" style="left:6px;top:355.5px;width:20px;height:20px;"><svg viewBox="0 0 20 20"><path d="M5 6l3.500-2.500L12 6l-1 4.500H6z" fill="none" stroke="#ddd" stroke-width="1.200"></path><path d="M10 8.500l6 3-2.500.8 1.500 2.500-1.200.7-1.500-2.500-1.800 1.800z" fill="#eee"></path></svg></div>
<div class="btn" style="left:6px;top:379px;width:20px;height:20px;"><svg viewBox="0 0 20 20"><path d="M4 14.500l9-9c1-1 3.500 1.500 2.500 2.500l-7 6.500z" fill="none" stroke="#eee" stroke-width="1.300"></path><path d="M4 14.500l5-4.500 2 2-3 2.500z" fill="#eee"></path></svg></div>
<div class="a" style="left:12px;top:402px;width:8px;height:1.500px;background:#5a5a5a"></div>
<div class="btn" style="left:6px;top:407px;width:20px;height:20px;"><svg viewBox="0 0 20 20"><path d="M4.500 15.500l1-3 5.500-5.500 2 2-5.500 5.500z" fill="none" stroke="#eee" stroke-width="1.300"></path><path d="M10.500 6l3.500 3.500M12 7.500l2.500-2.500c1-1 2 0 1 1L13 8.500" stroke="#eee" stroke-width="2" fill="none"></path></svg></div>
<div class="btn" style="left:6px;top:430.5px;width:20px;height:20px;"><svg viewBox="0 0 20 20"><g stroke="#eee" stroke-width="1.900" stroke-linecap="round"><path d="M7.300 10.500L6.300 5.800M9.600 10L9.300 4.200M11.800 10.200L12.300 4.900M13.700 11L14.800 7.200M6.800 13.500L4.300 10.800"></path></g><path d="M6.300 10L14.500 10.500L14 14.500C13 16.800 9 17.300 7.500 15.800L5.500 13z" fill="#eee"></path></svg></div>
</div>
<div class="a" style="left:29px;top:58px;width:148px;height:258px;background:#242424">
<div class="hdr" style="left:0px;top:-0.3px;width:147px"><div class="c" style="right:25px"><span style="transform: scaleX(0.922); transform-origin: 50% 50%;">Color</span></div><svg class="a" style="right:17px;top:2.500px;width:9px;height:9px" viewBox="0 0 9 9"><path d="M5.500 2H1.500v5.500h5.500V4" fill="none" stroke="#aaa" stroke-width="1"></path><path d="M4 5l4-4M5.500 .800h2.700v2.700" fill="none" stroke="#aaa" stroke-width="1"></path></svg><svg class="a" style="right:4px;top:3.500px;width:8px;height:8px" viewBox="0 0 8 8"><path d="M1 1l6 6M7 1l-6 6" stroke="#e8e8e8" stroke-width="2"></path></svg></div>
<div class="a" style="left:13px;top:29.500px;width:16px;height:15.500px;background:#000"></div>
<div class="a" style="left:5.500px;top:22.500px;width:17px;height:16px;background:#000;border:2px solid #d81c1c"></div>
<div class="a" style="left:8px;top:50.500px;width:18.500px;height:18px;background:#fff conic-gradient(#ddd 25%,#fff 0 50%,#ddd 0 75%,#fff 0) 0 0/9px 9px"></div>
<div class="t" style="left: 6.5px; top: 73px; font-size: 8px; line-height: 9px; color: rgb(208, 208, 208); transform: scaleX(0.892); transform-origin: 0px 50%;">R:0</div>
<div class="t" style="left: 6.5px; top: 81.2px; font-size: 8px; line-height: 9px; color: rgb(208, 208, 208); transform: scaleX(0.873); transform-origin: 0px 50%;">G:0</div>
<div class="t" style="left: 6.5px; top: 89.4px; font-size: 8px; line-height: 9px; color: rgb(208, 208, 208); transform: scaleX(0.878); transform-origin: 0px 50%;">B:0</div>
<div class="t" style="left: 6.5px; top: 103.5px; font-size: 8px; line-height: 9px; color: rgb(208, 208, 208); transform: scaleX(0.821); transform-origin: 0px 50%;">#000000</div>
<div class="btn" style="left:7.5px;top:122.5px;width:17px;height:18.5px;"><svg viewBox="0 0 16 16"><path d="M8 3a5 5 0 1 0 0 10c1 0 1.300-.8.800-1.500-.5-.8 0-1.500 1-1.500h1.200a2 2 0 0 0 2-2c0-2.800-2.300-5-5-5z" fill="#eee"></path><circle cx="5.500" cy="7" r=".9" fill="#444"></circle><circle cx="7.500" cy="5" r=".9" fill="#444"></circle><circle cx="10" cy="5.500" r=".9" fill="#444"></circle><circle cx="6" cy="10" r=".9" fill="#444"></circle></svg></div>
<div class="btn" style="left:27.8px;top:122.5px;width:17px;height:18.5px;"><svg viewBox="0 0 16 16"><path d="M7 2.500a4 4 0 1 0 0 8c.8 0 1-.6.600-1.200-.4-.6 0-1.200.800-1.200h1a1.600 1.600 0 0 0 1.600-1.600c0-2.200-1.800-4-4-4z" fill="#eee"></path><circle cx="5" cy="5.500" r=".8" fill="#444"></circle><circle cx="7" cy="4.200" r=".8" fill="#444"></circle><rect x="7.500" y="9.500" width="6" height="4" fill="#eee"></rect><path d="M8.500 11h4M8.500 12.300h4" stroke="#444" stroke-width=".6"></path></svg></div>
<div class="a" style="left:51px;top:18.500px;width:75px;height:234px;background:linear-gradient(to top,#000,rgba(0,0,0,0)),linear-gradient(to right,#fff,#3206f8)"></div>
<div class="a" style="left:129px;top:18.500px;width:15px;height:234px;background:linear-gradient(to bottom,#f00 0%,#f0f 16.670%,#00f 33.330%,#0ff 50%,#0f0 66.670%,#ff0 83.330%,#f00 100%)"></div>
<div class="a" style="left:131.500px;top:84px;width:10px;height:10px;border:2px solid #fff;border-radius:5px;box-shadow:0 0 0 .5px #335"></div>
<div class="a" style="left:46.500px;top:246.500px;width:9px;height:9px;border:2px solid #fff;border-radius:5px;clip-path:inset(0 0 3.500px 4.500px)"></div>
</div>
<div class="a" style="left:29px;top:316px;width:148px;height:219px;background:#242424">
<div class="hdr" style="left:0px;top:0.2px;width:147px"><div class="c" style="right:25px"><span style="transform: scaleX(0.856); transform-origin: 50% 50%;">Brush: Sumi</span></div><svg class="a" style="right:17px;top:2.500px;width:9px;height:9px" viewBox="0 0 9 9"><path d="M5.500 2H1.500v5.500h5.500V4" fill="none" stroke="#aaa" stroke-width="1"></path><path d="M4 5l4-4M5.500 .800h2.700v2.700" fill="none" stroke="#aaa" stroke-width="1"></path></svg><svg class="a" style="right:4px;top:3.500px;width:8px;height:8px" viewBox="0 0 8 8"><path d="M1 1l6 6M7 1l-6 6" stroke="#e8e8e8" stroke-width="2"></path></svg></div>
<div class="a" style="left:2px;top:17px;width:128px;height:176.500px;background:#707070;overflow:hidden">
<div class="a" style="left:0;top:-3.60px;width:128px;height:14.200px;background:#555555"><div class="a" style="left:3px;top:2.500px;width:9px;height:9px;background:#f0e020;box-shadow:0 0 0 .5px #333"></div><div class="t" style="left:16px;top:1.500px;font-size:9px;color:#f0f0f0">50</div> <div class="t" style="left: 40px; top: 1.5px; font-size: 9px; color: rgb(240, 240, 240); transform: scaleX(0.999); transform-origin: 0px 50%;">Stipple Pen</div></div>
<div class="a" style="left:0;top:11.38px;width:128px;height:14.200px;background:#4d97d3"><div class="a" style="left:3px;top:2.500px;width:9px;height:9px;background:#f0e020;box-shadow:0 0 0 .5px #333"></div><div class="t" style="left:16px;top:1.500px;font-size:9px;color:#b77fd0;font-weight:bold;font-style:italic">7</div> <div class="t" style="left: 40px; top: 1.5px; font-size: 9px; color: rgb(255, 255, 255); font-weight: bold; transform: scaleX(0.978); transform-origin: 0px 50%;">Sumi</div><svg class="a" style="left:114.500px;top:2px;width:10.500px;height:10.500px" viewBox="0 0 20 20"><path d="M15.98 8.36L18.34 8.34L18.34 11.66L15.98 11.64L15.39 13.07L17.07 14.72L14.72 17.07L13.07 15.39L11.64 15.98L11.66 18.34L8.34 18.34L8.36 15.98L6.93 15.39L5.28 17.07L2.93 14.72L4.61 13.07L4.02 11.64L1.66 11.66L1.66 8.34L4.02 8.36L4.61 6.93L2.93 5.28L5.28 2.93L6.93 4.61L8.36 4.02L8.34 1.66L11.66 1.66L11.64 4.02L13.07 4.61L14.72 2.93L17.07 5.28L15.39 6.93ZM7.80 10.00a2.20 2.20 0 1 0 4.40 0a2.20 2.20 0 1 0 -4.40 0Z" fill="#fff" fill-rule="evenodd"></path></svg></div>
<div class="a" style="left:0;top:26.36px;width:128px;height:14.200px;background:#555555"><div class="a" style="left:3px;top:2.500px;width:9px;height:9px;background:#70d8f8;box-shadow:0 0 0 .5px #333"></div><div class="t" style="left:16px;top:1.500px;font-size:9px;color:#f0f0f0">50</div> <div class="t" style="left: 40px; top: 1.5px; font-size: 9px; color: rgb(240, 240, 240); transform: scaleX(1.02); transform-origin: 0px 50%;">Watercolor</div></div>
<div class="a" style="left:0;top:41.34px;width:128px;height:14.200px;background:#555555"><div class="a" style="left:3px;top:2.500px;width:9px;height:9px;background:#70d8f8;box-shadow:0 0 0 .5px #333"></div><div class="t" style="left:16px;top:1.500px;font-size:9px;color:#f0f0f0">100</div> <div class="t" style="left: 40px; top: 1.5px; font-size: 9px; color: rgb(240, 240, 240); transform: scaleX(1.067); transform-origin: 0px 50%;">Watercolor (Wet)</div></div>
<div class="a" style="left:0;top:56.32px;width:128px;height:14.200px;background:#555555"><div class="a" style="left:3px;top:2.500px;width:9px;height:9px;background:#f0e020;box-shadow:0 0 0 .5px #333"></div><div class="t" style="left:16px;top:1.500px;font-size:9px;color:#f0f0f0">50</div> <div class="t" style="left: 40px; top: 1.5px; font-size: 9px; color: rgb(240, 240, 240); transform: scaleX(0.937); transform-origin: 0px 50%;">Acrylic</div></div>
<div class="a" style="left:0;top:71.30px;width:128px;height:14.200px;background:#555555"><div class="a" style="left:3px;top:2.500px;width:9px;height:9px;background:#d2d2d2;box-shadow:0 0 0 .5px #333"></div><div class="t" style="left:16px;top:1.500px;font-size:9px;color:#f0f0f0">100</div> <div class="t" style="left: 40px; top: 1.5px; font-size: 9px; color: rgb(240, 240, 240); transform: scaleX(0.954); transform-origin: 0px 50%;">Airbrush</div></div>
<div class="a" style="left:0;top:86.28px;width:128px;height:14.200px;background:#555555"><div class="a" style="left:3px;top:2.500px;width:9px;height:9px;background:#f8a4f4;box-shadow:0 0 0 .5px #333"></div><div class="t" style="left:16px;top:1.500px;font-size:9px;color:#f0f0f0">50</div> <div class="t" style="left: 40px; top: 1.5px; font-size: 9px; color: rgb(240, 240, 240); transform: scaleX(0.922); transform-origin: 0px 50%;">Blur</div></div>
<div class="a" style="left:0;top:101.26px;width:128px;height:14.200px;background:#555555"><div class="a" style="left:3px;top:2.500px;width:9px;height:9px;background:#f8d8c0;box-shadow:0 0 0 .5px #333"></div><div class="t" style="left:16px;top:1.500px;font-size:9px;color:#f0f0f0">70</div> <div class="t" style="left: 40px; top: 1.5px; font-size: 9px; color: rgb(240, 240, 240); transform: scaleX(0.987); transform-origin: 0px 50%;">Smudge</div></div>
<div class="a" style="left:0;top:116.24px;width:128px;height:14.200px;background:#555555"><div class="a" style="left:3px;top:2.500px;width:9px;height:9px;background:#3050f0;box-shadow:0 0 0 .5px #333"></div><div class="t" style="left:16px;top:1.500px;font-size:9px;color:#f0f0f0">100</div> <div class="t" style="left: 40px; top: 1.5px; font-size: 9px; color: rgb(240, 240, 240); transform: scaleX(0.957); transform-origin: 0px 50%;">Sparkle Brush</div></div>
<div class="a" style="left:0;top:131.22px;width:128px;height:14.200px;background:#555555"><div class="a" style="left:3px;top:2.500px;width:9px;height:9px;background:#f03030;box-shadow:0 0 0 .5px #333"></div><div class="t" style="left:16px;top:1.500px;font-size:9px;color:#f0f0f0">10</div> <div class="t" style="left: 40px; top: 1.5px; font-size: 9px; color: rgb(240, 240, 240); transform: scaleX(1.014); transform-origin: 0px 50%;">Rotation Symmetry P</div></div>
<div class="a" style="left:0;top:146.20px;width:128px;height:14.200px;background:#555555"><div class="a" style="left:3px;top:2.500px;width:9px;height:9px;background:#ffffff;box-shadow:0 0 0 .5px #333"></div><div class="t" style="left:16px;top:1.500px;font-size:9px;color:#f0f0f0">50</div> <div class="t" style="left: 40px; top: 1.5px; font-size: 9px; color: rgb(240, 240, 240); transform: scaleX(1.034); transform-origin: 0px 50%;">Eraser (Soft)</div></div>
<div class="a" style="left:0;top:161.18px;width:128px;height:14.200px;background:#555555"><div class="a" style="left:3px;top:2.500px;width:9px;height:9px;background:#ffffff;box-shadow:0 0 0 .5px #333"></div><div class="t" style="left:16px;top:1.500px;font-size:9px;color:#f0f0f0">50</div> <div class="t" style="left: 40px; top: 1.5px; font-size: 9px; color: rgb(240, 240, 240); transform: scaleX(0.945); transform-origin: 0px 50%;">Eraser</div></div>
</div>
<div class="a" style="left:131px;top:17px;width:13px;height:176.500px;background:#2b2b2b"></div>
<div class="a" style="left:134.500px;top:19px;border:3px solid transparent;border-bottom:4.500px solid #bbb;border-top:0"></div>
<div class="a" style="left:134.500px;top:187px;border:3px solid transparent;border-top:4.500px solid #bbb;border-bottom:0"></div>
<div class="a" style="left:130.500px;top:86px;width:13px;height:98px;border-radius:5px;background:linear-gradient(90deg,#6a6a6a,#5a5a5a)"></div>
<div class="btn" style="left:4.6px;top:196.4px;width:15.6px;height:16px;"><svg viewBox="0 0 16 16"><path d="M4.500 9.500a2.300 2.300 0 0 1 .3-4.600 3.200 3.200 0 0 1 6.200-.4 2.500 2.500 0 0 1 .5 5z" fill="#e8e8e8"></path><path d="M8 13.500V8M5.800 10L8 7.800l2.200 2.200" stroke="#e8e8e8" stroke-width="1.600" fill="none"></path></svg></div>
<div class="btn" style="left:24.8px;top:196.4px;width:15.6px;height:16px;"><svg viewBox="0 0 16 16"><path d="M4.500 3h5l2.500 2.500V13h-7.500z" fill="none" stroke="#e8e8e8" stroke-width="1.200"></path></svg></div>
<div class="btn" style="left:44.6px;top:196.4px;width:21px;height:16px;"><svg viewBox="0 0 21 16"><rect x="3.500" y="3.500" width="8" height="9" fill="none" stroke="#e8e8e8" stroke-width="1.100"></rect><path d="M5 6h2.500v2.500H5zM7.500 8.500H10V11H7.500z" fill="#e8e8e8"></path><path d="M13.500 7h5l-2.500 3z" fill="#e8e8e8"></path></svg></div>
<div class="btn" style="left:69.8px;top:196.4px;width:15.8px;height:16px;"><svg viewBox="0 0 16 16"><path d="M4.500 3h5l2.500 2.500V13h-7.500z" fill="none" stroke="#e8e8e8" stroke-width="1.200"></path><text x="6" y="11.500" font-size="6" fill="#e8e8e8" font-family="Liberation Sans,sans-serif">S</text></svg></div>
<div class="btn" style="left:89.8px;top:196.4px;width:15.8px;height:16px;"><svg viewBox="0 0 16 16"><path d="M3 4.500h4l1 1.200h5V12.500H3z" fill="#e8e8e8"></path></svg></div>
<div class="btn" style="left:109.6px;top:196.4px;width:15.8px;height:16px;"><svg viewBox="0 0 16 16"><rect x="3.500" y="5.500" width="7" height="7" fill="none" stroke="#e8e8e8" stroke-width="1.100"></rect><path d="M6 5V3.500h7v7h-2" fill="none" stroke="#e8e8e8" stroke-width="1.100"></path></svg></div>
<div class="a" style="left:135.500px;top:196px;width:6px;height:16.500px;border-radius:3px;background:#555"></div>
</div>
<div class="a" style="left:177px;top:58px;width:585px;height:477px;background:#222">
<div class="a" style="left:1px;top:1px;width:291px;height:15.500px;border-radius:2px 2px 0 0;background:linear-gradient(#4b4b4b,#3a3a3a 40%,#2c2c2c)"></div>
<div class="t" style="left: 132px; top: 3px; font-size: 9px; color: rgb(212, 212, 212); transform: scaleX(0.874); transform-origin: 0px 50%;">Untitled</div>
<div class="a" style="left:1px;top:18px;width:566px;height:441.500px;background:linear-gradient(#3a3939,#474544 9px,#474544)"></div>
<div class="a" style="left:4px;top:29.500px;width:560px;height:419.500px;background:#fff"></div>
<div class="a" style="left:565px;top:18px;width:17px;height:441.500px;background:linear-gradient(90deg,#242424,#3c3c3c)"></div>
<div class="a" style="left:571px;top:20px;border:3px solid transparent;border-bottom:5px solid #bdbdbd;border-top:0"></div>
<div class="a" style="left:571px;top:453px;border:3px solid transparent;border-top:5px solid #bdbdbd;border-bottom:0"></div>
<div class="a" style="left:567.500px;top:186px;width:13.500px;height:107px;border-radius:4px;background:linear-gradient(90deg,#626262,#6a6a6a)"></div>
<div class="a" style="left:1px;top:459.500px;width:581px;height:15.500px;background:linear-gradient(#3c3c3c,#262626)"></div>
<div class="a" style="left:3.500px;top:464px;border:3px solid transparent;border-right:5px solid #bdbdbd;border-left:0"></div>
<div class="a" style="left:574.500px;top:464px;border:3px solid transparent;border-left:5px solid #bdbdbd;border-right:0"></div>
<div class="a" style="left:221.500px;top:461px;width:140.500px;height:12.500px;border-radius:4px;background:linear-gradient(#707070,#666)"></div>
<div class="a" style="left:566px;top:459.500px;width:16px;height:15.500px;background:#2a2a2a"></div>
<div class="a" style="left:574.500px;top:464px;border:3px solid transparent;border-left:5px solid #bdbdbd;border-right:0"></div>
<svg class="a" style="left:4px;top:29.500px;width:560px;height:419.500px" viewBox="181 87.500 560 419.500">
<path d="M406.500 168.500C398 160 388 148 391 134C393 124 399 122 403 123C410 124 416 130 414.500 140C413.500 150 410 160 406.500 168.500Z" fill="#2ea043" stroke="#0a0a0a" stroke-width="1.300"></path>
<path d="M406.500 168.500C411 163 418 160 426 160.500C436 161 443 165 442.500 171C442 177 434 180 426 179.500C418 179 411 174 406.500 168.500Z" fill="#2ea043" stroke="#0a0a0a" stroke-width="1.300"></path>
<path d="M406 166C404 158 403 150 404.500 143C406 140 407 141 406.500 145" fill="none" stroke="#e8f5e8" stroke-width="1"></path>
<path d="M413 171.500C418 173.500 424 174 429 173.500L428.500 171.500L417 171" fill="none" stroke="#e8f5e8" stroke-width="1"></path>
<path d="M406.500 168.500C401 173 398 178 397 185" fill="none" stroke="#0a0a0a" stroke-width="1.800" stroke-linecap="round" stroke-linejoin="round"></path>
<path d="M328.9 345.4C326.6 345.0 319.8 344.2 315.3 343.0C310.8 341.8 306.7 340.9 301.7 338.0C296.7 335.1 289.9 330.3 285.4 325.8C280.9 321.3 277.4 316.5 274.5 310.8C271.6 305.1 269.3 297.4 267.7 291.8C266.1 286.2 265.3 281.6 265.0 277.0C264.7 272.4 265.3 267.8 266.0 264.0C266.7 260.2 267.1 259.2 269.0 254.0C270.9 248.8 273.1 239.5 277.2 232.5C281.3 225.5 287.1 217.9 293.5 212.0C299.9 206.1 307.1 201.2 315.3 197.1C323.5 193.0 333.4 189.9 342.5 187.6C351.6 185.3 360.7 183.9 369.8 183.5C378.9 183.1 388.8 184.0 397.0 185.0C405.2 186.0 411.6 186.6 418.8 189.5C426.1 192.4 434.1 196.2 440.5 202.5C446.9 208.8 452.8 218.8 456.9 227.0C461.0 235.2 463.2 244.0 465.0 251.5C466.8 259.0 467.5 265.9 467.7 272.0C467.9 278.1 467.5 282.4 466.4 288.0C465.3 293.6 463.4 300.0 460.9 305.4C458.4 310.8 454.8 316.3 451.4 320.4C448.0 324.5 442.3 328.2 440.5 329.8" fill="none" stroke="#0a0a0a" stroke-width="1.800" stroke-linecap="round" stroke-linejoin="round"></path>
<path d="M395.600 343.500C410 341 424.200 336.700 440.500 330.400C446 328.500 451.400 329 455 331.500C459 335 459.500 341 455.500 347.600C452 352 446 355.700 429.600 361.200C424 362.500 420 363 416 363.100" fill="none" stroke="#0a0a0a" stroke-width="1.800" stroke-linecap="round" stroke-linejoin="round"></path>
<path d="M416 363.100C417 372 417 378 416.600 384.300C416 394 415 402 413.300 411.500C411 424 408 436 404 447" fill="none" stroke="#0a0a0a" stroke-width="1.800" stroke-linecap="round" stroke-linejoin="round"></path>
<path d="M303 340.200C296 343 291 345.500 285.400 349C280 353 276 357 273.100 361.200C269.500 366 268 370 268.500 373.400C269 378 270.500 381 273.100 383C277 385.500 281 386 285.400 385.700C291 385 296 383 300.400 380.200" fill="none" stroke="#0a0a0a" stroke-width="1.800" stroke-linecap="round" stroke-linejoin="round"></path>
<path d="M306.300 370.700C303.500 377 301.500 382 300.400 387C298 396 296.500 404 295.700 411.500C294.500 421 293.800 430 293.500 439" fill="none" stroke="#0a0a0a" stroke-width="1.800" stroke-linecap="round" stroke-linejoin="round"></path>
<path d="M322.100 240.100L342.500 252.100L319.400 259.200" fill="none" stroke="#0a0a0a" stroke-width="1.800" stroke-linecap="round" stroke-linejoin="round"></path>
<path d="M422 247.400L402.400 255.600L414.700 272.800" fill="none" stroke="#0a0a0a" stroke-width="1.800" stroke-linecap="round" stroke-linejoin="round"></path>
<path d="M349.300 265.100C349 270 351.500 273 355.500 273C360 273 363.500 269 363.800 264.600C364.500 270 368 274.700 373.800 274.700C379 274.700 383 270.500 383.900 265.700" fill="none" stroke="#0a0a0a" stroke-width="1.800" stroke-linecap="round" stroke-linejoin="round"></path>
<path d="M285.400 267.900L289.500 261.100M293 267.300L296.800 263M446 280.100L448.100 276.600M450.900 284.200L454.100 279.300" fill="none" stroke="#0a0a0a" stroke-width="1.800" stroke-linecap="round" stroke-linejoin="round"></path>
<text transform="rotate(4 543 118)" font-family="'Liberation Sans',sans-serif" fill="#0a0a0a" stroke="#0a0a0a" stroke-width=".5"><tspan x="544.500" y="119" font-size="27" textLength="12.500" lengthAdjust="spacingAndGlyphs">P</tspan><tspan x="557.500" y="117.500" font-size="22" textLength="66" lengthAdjust="spacingAndGlyphs">hương</tspan><tspan x="631" y="121.500" font-size="28" textLength="67" lengthAdjust="spacingAndGlyphs">161020</tspan><tspan x="700" y="121" font-size="23" textLength="28" lengthAdjust="spacingAndGlyphs">-1D</tspan></text>
<text transform="rotate(2.500 552 166)" font-family="'Liberation Sans',sans-serif" fill="#0a0a0a" stroke="#0a0a0a" stroke-width=".5" font-size="28"><tspan x="552.8" y="167.5" textLength="22.2" lengthAdjust="spacingAndGlyphs">#</tspan><tspan x="584.5" y="167" textLength="12" lengthAdjust="spacingAndGlyphs">H</tspan><tspan x="601.5" y="167.5" textLength="12" lengthAdjust="spacingAndGlyphs">O</tspan><tspan x="620.5" y="167" textLength="5" lengthAdjust="spacingAndGlyphs" font-size="22">I</tspan><tspan x="634.5" y="167.5" textLength="10.5" lengthAdjust="spacingAndGlyphs">D</tspan><tspan x="648" y="166.5" textLength="16.5" lengthAdjust="spacingAndGlyphs">A</tspan><tspan x="670" y="166" textLength="14" lengthAdjust="spacingAndGlyphs">P</tspan></text>
<circle cx="625.300" cy="147.800" r="1.500" fill="#0a0a0a"></circle>
</svg>
</div>
<div class="a" style="left:762px;top:58px;width:262px;height:477px;background:#262626;overflow:hidden">
<div class="hdr" style="left:0;top:0.7px;width:262px"><div class="c"><span style="transform: scaleX(0.909); transform-origin: 50% 50%;">Navigator</span></div><svg class="a" style="right:11.500px;top:2.500px;width:9px;height:9px" viewBox="0 0 9 9"><path d="M5.500 2H1.500v5.500h5.500V4" fill="none" stroke="#aaa" stroke-width="1"></path><path d="M4 5l4-4M5.500 .800h2.700v2.700" fill="none" stroke="#aaa" stroke-width="1"></path></svg><svg class="a" style="right:-1.500px;top:3.500px;width:8px;height:8px" viewBox="0 0 8 8"><path d="M1 1l6 6M7 1l-6 6" stroke="#e8e8e8" stroke-width="2"></path></svg></div>
<div class="a" style="left:0;top:18px;width:262px;height:21px;background:#262626"></div>
<div class="btn" style="left:3px;top:20.5px;width:17.5px;height:16.5px;"><svg viewBox="0 0 18 17"><circle cx="8" cy="7.500" r="4" fill="none" stroke="#e8e8e8" stroke-width="1.400"></circle><path d="M11 10.500l3.500 3.500" stroke="#e8e8e8" stroke-width="2"></path><path d="M8 5.500v4M7 6.500l1-1" stroke="#e8e8e8" stroke-width="1"></path></svg></div>
<div class="sep" style="left:24.5px;top:24px;height:9px"></div>
<div class="btn" style="left:29px;top:20.5px;width:16.5px;height:16.5px;"><svg viewBox="0 0 18 17"><circle cx="8" cy="7.500" r="4" fill="none" stroke="#e8e8e8" stroke-width="1.400"></circle><path d="M11 10.500l3.500 3.500" stroke="#e8e8e8" stroke-width="2"></path><path d="M6 7.500h4M8 5.500v4" stroke="#e8e8e8" stroke-width="1.100"></path></svg></div>
<div class="btn" style="left:49.2px;top:20.5px;width:16.5px;height:16.5px;"><svg viewBox="0 0 18 17"><rect x="3.500" y="3.500" width="11" height="10" fill="none" stroke="#e8e8e8" stroke-width="1.100"></rect><path d="M5 5h3L5 8zM13 5v3L10 5zM5 12V9l3 3zM13 12h-3l3-3z" fill="#e8e8e8"></path></svg></div>
<div class="btn" style="left:69.3px;top:20.5px;width:16.5px;height:16.5px;"><svg viewBox="0 0 18 17"><circle cx="8" cy="7.500" r="4" fill="none" stroke="#e8e8e8" stroke-width="1.400"></circle><path d="M11 10.500l3.500 3.500" stroke="#e8e8e8" stroke-width="2"></path><path d="M6 7.500h4" stroke="#e8e8e8" stroke-width="1.100"></path></svg></div>
<div class="sep" style="left:90.5px;top:24px;height:9px"></div>
<div class="btn" style="left:95px;top:20.5px;width:16.8px;height:16.5px;"><svg viewBox="0 0 18 17"><path d="M6.500 3.800A5.500 5.500 0 1 1 3.800 7" fill="none" stroke="#e8e8e8" stroke-width="1.700"></path><path d="M3 2.500l4.500.5-2.500 3.500z" fill="#e8e8e8"></path><rect x="6.300" y="6.300" width="5.400" height="4.400" fill="#e8e8e8" transform="rotate(-25 9 8.500)"></rect></svg></div>
<div class="btn" style="left:115.2px;top:20.5px;width:16.5px;height:16.5px;background:#1e1e1e;border-color:#555;"><svg viewBox="0 0 18 17"><rect x="5.500" y="5.500" width="7" height="6" fill="#e8e8e8"></rect><path d="M3.500 6V3.500H6M12 3.500h2.500V6M14.500 11v2.500H12M6 13.500H3.500V11" fill="none" stroke="#e8e8e8" stroke-width="1.400"></path></svg></div>
<div class="btn" style="left:135.4px;top:20.5px;width:16.6px;height:16.5px;"><svg viewBox="0 0 18 17"><path d="M11.500 3.800A5.500 5.500 0 1 0 14.200 7" fill="none" stroke="#e8e8e8" stroke-width="1.700"></path><path d="M15 2.500l-4.500.5 2.500 3.500z" fill="#e8e8e8"></path><rect x="6.300" y="6.300" width="5.400" height="4.400" fill="#e8e8e8" transform="rotate(25 9 8.500)"></rect></svg></div>
<div class="sep" style="left:156.8px;top:24px;height:9px"></div>
<div class="btn" style="left:161.3px;top:20.5px;width:16.5px;height:16.5px;"><svg viewBox="0 0 18 17"><path d="M4 13.500V8h4v5.500zM10 13.500V5h4v8.500z" fill="#e8e8e8"></path><path d="M6 6c0-3 6-3 6-1.500" fill="none" stroke="#e8e8e8" stroke-width="1"></path></svg></div>
<div class="a" style="left:1px;top:39px;width:261px;height:40.500px;background:#454343"></div>
<div class="a" style="left:106.500px;top:40px;width:51.500px;height:39.500px;background:#fff;border:1.200px solid #d81818"></div>
<svg class="a" style="left:107.500px;top:41px;width:49.500px;height:37.500px" viewBox="181 87.500 560 419.500"><g fill="none" stroke="#98a4bc" stroke-width="6"><ellipse cx="366" cy="265" rx="101" ry="81"></ellipse><path d="M303 340C270 355 260 385 300 380M296 385L293 440M396 343L455 332C462 340 450 355 416 363L404 447"></path><path d="M397 185L406 168"></path></g><ellipse cx="404" cy="148" rx="12" ry="22" fill="#5a9a66"></ellipse><g stroke="#777" stroke-width="6" stroke-dasharray="14 5"><path d="M545 108L728 122M553 158L684 164"></path></g></svg>
<div class="hdr" style="left:0;top:82.7px;width:262px"><div class="c"><span style="transform: scaleX(0.842); transform-origin: 50% 50%;">Layer</span></div><svg class="a" style="right:11.500px;top:2.500px;width:9px;height:9px" viewBox="0 0 9 9"><path d="M5.500 2H1.500v5.500h5.500V4" fill="none" stroke="#aaa" stroke-width="1"></path><path d="M4 5l4-4M5.500 .800h2.700v2.700" fill="none" stroke="#aaa" stroke-width="1"></path></svg><svg class="a" style="right:-1.500px;top:3.500px;width:8px;height:8px" viewBox="0 0 8 8"><path d="M1 1l6 6M7 1l-6 6" stroke="#e8e8e8" stroke-width="2"></path></svg></div>
<div class="t" style="left: 4.5px; top: 104px; font-size: 9px; color: rgb(216, 216, 216); transform: scaleX(0.915); transform-origin: 0px 50%;">Opacity</div>
<div class="a" style="left:71px;top:104px;width:154.500px;height:11px;background:linear-gradient(90deg,#7ec6fa,#58a4e4 60%,#4a90cc)"></div>
<div class="t" style="left: 230.5px; top: 104px; font-size: 9px; color: rgb(216, 216, 216); transform: scaleX(0.855); transform-origin: 0px 50%;">100 %</div>
<div class="t" style="left: 4.5px; top: 122.5px; font-size: 9px; color: rgb(216, 216, 216); transform: scaleX(0.857); transform-origin: 0px 50%;">Blending</div>
<div class="a" style="left:72px;top:120px;width:190px;height:16px;background:#464646;border-radius:2px"></div>
<div class="t" style="left: 74.5px; top: 122.5px; font-size: 9px; color: rgb(216, 216, 216); transform: scaleX(0.854); transform-origin: 0px 50%;">Normal</div>
<div class="a" style="left:253px;top:126px;border:3px solid transparent;border-top:3.500px solid #aaa;border-bottom:0"></div>
<div class="a" style="left:7.500px;top:144.500px;width:8px;height:8px;border:1px solid #4a4a4a"></div>
<div class="t" style="left: 19px; top: 142.5px; font-size: 9px; color: rgb(140, 140, 140); transform: scaleX(0.904); transform-origin: 0px 50%;">Protect Alpha</div>
<div class="a" style="left:94.500px;top:144.500px;width:8px;height:8px;border:1px solid #4a4a4a"></div>
<div class="t" style="left: 106.5px; top: 142.5px; font-size: 9px; color: rgb(140, 140, 140); transform: scaleX(0.864); transform-origin: 0px 50%;">Clipping</div>
<div class="a" style="left:180px;top:144px;width:9px;height:9px;border:1px solid #d8d8d8;border-radius:1px"></div>
<div class="t" style="left: 192.5px; top: 142.5px; font-size: 9px; color: rgb(240, 240, 240); transform: scaleX(0.894); transform-origin: 0px 50%;">Lock</div>
<div class="a" style="left:2.500px;top:158.500px;width:246px;height:93px;background:#454343"></div>
<div class="a" style="left:2.500px;top:158.800px;width:14.500px;height:28.400px;background:#5c5c5c"></div>
<div class="a" style="left:5.200px;top:169.500px;width:7px;height:7px;border-radius:4px;background:#e6e6e6"></div>
<div class="a" style="left:17px;top:158.800px;width:231.500px;height:28.400px;background:#4d97d3;border-bottom:1px solid #2a4e70"></div>
<div class="a" style="left:27.500px;top:164.500px;width:27.500px;height:19px;background:#fff conic-gradient(#d4d4d4 25%,#fff 0 50%,#d4d4d4 0 75%,#fff 0) 0 0/5px 5px;box-shadow:0 0 0 .5px #9ab"></div>
<svg class="a" style="left:27.500px;top:164.500px;width:27.500px;height:19px" viewBox="0 0 27.500 19"><path d="M9 3c3 1 4 5 3 8M16 2h8" stroke="#888" stroke-width=".6" fill="none"></path></svg>
<div class="t" style="left: 66.5px; top: 168px; font-size: 10px; color: rgb(255, 255, 255); font-weight: bold; font-family: &quot;DejaVu Sans&quot;, sans-serif; transform: scaleX(0.894); transform-origin: 0px 50%;">Layer1</div>
<div class="t" style="left: 215.5px; top: 175.5px; font-size: 7px; color: rgb(232, 240, 255); line-height: 9px; transform: scaleX(0.996); transform-origin: 0px 50%;">8</div>
<div class="a" style="left:221px;top:177.500px;width:8.500px;height:8px;background:#000"></div>
<svg class="a" style="left:231.500px;top:165.500px;width:15px;height:15px" viewBox="0 0 20 20"><path d="M15.98 8.36L18.34 8.34L18.34 11.66L15.98 11.64L15.39 13.07L17.07 14.72L14.72 17.07L13.07 15.39L11.64 15.98L11.66 18.34L8.34 18.34L8.36 15.98L6.93 15.39L5.28 17.07L2.93 14.72L4.61 13.07L4.02 11.64L1.66 11.66L1.66 8.34L4.02 8.36L4.61 6.93L2.93 5.28L5.28 2.93L6.93 4.61L8.36 4.02L8.34 1.66L11.66 1.66L11.64 4.02L13.07 4.61L14.72 2.93L17.07 5.28L15.39 6.93ZM7.80 10.00a2.20 2.20 0 1 0 4.40 0a2.20 2.20 0 1 0 -4.40 0Z" fill="#fff" fill-rule="evenodd"></path></svg>
<div class="a" style="left:249px;top:158.500px;width:13px;height:93px;background:#2c2c2c"></div>
<div class="a" style="left:252.500px;top:160px;border:3px solid transparent;border-bottom:4.500px solid #bbb;border-top:0"></div>
<div class="a" style="left:252.500px;top:245px;border:3px solid transparent;border-top:4.500px solid #bbb;border-bottom:0"></div>
<div class="a" style="left:249.500px;top:167px;width:14px;height:75px;border-radius:5px;background:linear-gradient(90deg,#7a7a7a,#6c6c6c)"></div>
<div class="btn" style="left:5px;top:254.3px;width:17.2px;height:17px;"><svg viewBox="0 0 18 17"><path d="M5 3h6l2.500 2.500V14H5z" fill="none" stroke="#e8e8e8" stroke-width="1.200"></path></svg></div>
<div class="btn" style="left:25px;top:254.3px;width:17.2px;height:17px;"><svg viewBox="0 0 18 17"><path d="M5 3h6l2.500 2.500V14H5z" fill="none" stroke="#e8e8e8" stroke-width="1.200"></path><text x="7" y="12" font-size="7" font-weight="bold" fill="#e8e8e8" font-family="Liberation Sans,sans-serif">8</text></svg></div>
<div class="btn" style="left:45px;top:254.3px;width:17.2px;height:17px;"><svg viewBox="0 0 18 17"><path d="M5 3h6l2.500 2.500V14H5z" fill="none" stroke="#e8e8e8" stroke-width="1.200"></path><text x="7.200" y="12" font-size="7" font-weight="bold" fill="#e8e8e8" font-family="Liberation Sans,sans-serif">1</text></svg></div>
<div class="btn" style="left:66px;top:254.3px;width:22px;height:17px;"><svg viewBox="0 0 22 17"><path d="M4 3h5l2 2V12.500H4z" fill="none" stroke="#e8e8e8" stroke-width="1.100"></path><path d="M7.500 11.500h5M10 9v5" stroke="#e8e8e8" stroke-width="1.500"></path><path d="M14.500 7.500h5l-2.500 3z" fill="#e8e8e8"></path></svg></div>
<div class="btn" style="left:91px;top:254.3px;width:17.2px;height:17px;"><svg viewBox="0 0 18 17"><path d="M3.500 4.500h4l1 1.300h6V13.500H3.500z" fill="#e8e8e8"></path></svg></div>
<div class="sep" style="left:112.5px;top:258px;height:9px"></div>
<div class="btn" style="left:117px;top:254.3px;width:17.2px;height:17px;"><svg viewBox="0 0 18 17"><rect x="4" y="6" width="7.500" height="7.500" fill="none" stroke="#e8e8e8" stroke-width="1.100"></rect><path d="M6.500 5.500V3.500h7.500v7.500h-2" fill="none" stroke="#e8e8e8" stroke-width="1.100"></path></svg></div>
<div class="btn" style="left:137px;top:254.3px;width:17.2px;height:17px;background:#242424;border-color:#585858;"><svg viewBox="0 0 18 17"><rect x="3.500" y="3" width="4" height="4" fill="#e8e8e8"></rect><rect x="3.500" y="10" width="4" height="4" fill="#e8e8e8"></rect><rect x="11" y="6.500" width="4" height="4" fill="#e8e8e8"></rect><path d="M7.500 5h2v7h-2M9.500 8.500H11" fill="none" stroke="#e8e8e8" stroke-width="1"></path></svg></div>
<div class="sep" style="left:158px;top:258px;height:9px"></div>
<div class="btn" style="left:162.3px;top:254.3px;width:17.6px;height:17px;background:#242424;border-color:#585858;"><svg viewBox="0 0 18 17"><path d="M4.500 5.500h9M7 5.500V4h4v1.500" fill="none" stroke="#e8e8e8" stroke-width="1.300"></path><path d="M5.500 6.500h7l-.5 7.500h-6z" fill="none" stroke="#e8e8e8" stroke-width="1.200"></path><path d="M7.500 8v4.500M9 8v4.500M10.500 8v4.500" stroke="#e8e8e8" stroke-width="1"></path></svg></div>
<div class="hdr" style="left:0;top:279.1px;width:262px"><div class="c"><span style="transform: scaleX(0.921); transform-origin: 50% 50%;">Reference</span></div><svg class="a" style="right:11.500px;top:2.500px;width:9px;height:9px" viewBox="0 0 9 9"><path d="M5.500 2H1.500v5.500h5.500V4" fill="none" stroke="#aaa" stroke-width="1"></path><path d="M4 5l4-4M5.500 .800h2.700v2.700" fill="none" stroke="#aaa" stroke-width="1"></path></svg><svg class="a" style="right:-1.500px;top:3.500px;width:8px;height:8px" viewBox="0 0 8 8"><path d="M1 1l6 6M7 1l-6 6" stroke="#e8e8e8" stroke-width="2"></path></svg></div>
<div class="a" style="left:0;top:297px;width:262px;height:20px;background:#262626"></div>
<div class="btn" style="left:3.6px;top:297.8px;width:17.2px;height:17.4px;background:#505050;"><svg viewBox="0 0 18 17"><path d="M5 9.500a2.400 2.400 0 0 1 .3-4.800 3.300 3.300 0 0 1 6.400-.4 2.600 2.600 0 0 1 .6 5.200z" fill="#e8e8e8"></path><path d="M9 14.500V8.500M6.500 11L9 8.500l2.500 2.500" stroke="#e8e8e8" stroke-width="1.800" fill="none"></path></svg></div>
<div class="btn" style="left:23.8px;top:297.8px;width:17px;height:17.4px;"><svg viewBox="0 0 18 17"><path d="M3.500 4.500h4l1 1.300h5V8H6l-2.500 5.500z" fill="#e8e8e8"></path><path d="M6.500 8.500h8.500l-2.500 5H4z" fill="#e8e8e8"></path></svg></div>
<div class="btn" style="left:44.3px;top:297.8px;width:16.6px;height:17.4px;background:#242424;border-color:#585858;"><svg viewBox="0 0 18 17"><path d="M6 5.500l6 6M12 5.500l-6 6" stroke="#e8e8e8" stroke-width="1.600"></path></svg></div>
<div class="sep" style="left:64.5px;top:301.5px;height:9px"></div>
<div class="btn" style="left:68.8px;top:297.8px;width:17.4px;height:17.4px;background:#242424;border-color:#585858;"><svg viewBox="0 0 18 17"><circle cx="8" cy="7.500" r="4" fill="none" stroke="#e8e8e8" stroke-width="1.400"></circle><path d="M11 10.500l3.500 3.500" stroke="#e8e8e8" stroke-width="2"></path><path d="M6 7.500h4M8 5.500v4" stroke="#e8e8e8" stroke-width="1.100"></path></svg></div>
<div class="btn" style="left:89.3px;top:297.8px;width:17px;height:17.4px;background:#242424;border-color:#585858;"><svg viewBox="0 0 18 17"><rect x="3.500" y="3.500" width="11" height="10" fill="none" stroke="#e8e8e8" stroke-width="1.100"></rect><path d="M5 5h3L5 8zM13 5v3L10 5zM5 12V9l3 3zM13 12h-3l3-3z" fill="#e8e8e8"></path></svg></div>
<div class="btn" style="left:109.6px;top:297.8px;width:17.2px;height:17.4px;background:#242424;border-color:#585858;"><svg viewBox="0 0 18 17"><circle cx="8" cy="7.500" r="4" fill="none" stroke="#e8e8e8" stroke-width="1.400"></circle><path d="M11 10.500l3.500 3.500" stroke="#e8e8e8" stroke-width="2"></path><path d="M6 7.500h4" stroke="#e8e8e8" stroke-width="1.100"></path></svg></div>
<div class="sep" style="left:130.8px;top:301.5px;height:9px"></div>
<div class="btn" style="left:135px;top:297.8px;width:17px;height:17.4px;background:#242424;border-color:#585858;"><svg viewBox="0 0 18 17"><path d="M4.500 13.500l1-2.800 5-5 1.800 1.800-5 5z" fill="none" stroke="#e8e8e8" stroke-width="1.200"></path><path d="M10 5l3 3M11.500 6.500l2-2c.9-.9 1.800 0 .9.900L12.500 7.500" stroke="#e8e8e8" stroke-width="1.800" fill="none"></path></svg></div>
<div class="btn on" style="left:155px;top:297.8px;width:18px;height:17.4px;"><svg viewBox="0 0 18 17"><g stroke="#fff" stroke-width="1.800" stroke-linecap="round"><path d="M6.500 9L5.700 4.800M8.600 8.500L8.300 3.300M10.700 8.700L11.200 4M12.400 9.500L13.400 6M6 11.800L3.800 9.300"></path></g><path d="M5.600 8.500L13.200 9L12.700 12.700C11.800 14.800 8.200 15.200 6.800 13.800L5 11.300z" fill="#fff"></path></svg></div>
<div class="sep" style="left:177px;top:301.5px;height:9px"></div>
<div class="btn" style="left:181.5px;top:297.8px;width:16.6px;height:17.4px;background:#242424;border-color:#585858;"><svg viewBox="0 0 18 17"><path d="M6.500 3.800A5.500 5.500 0 1 1 3.800 7" fill="none" stroke="#e8e8e8" stroke-width="1.700"></path><path d="M3 2.500l4.500.5-2.500 3.500z" fill="#e8e8e8"></path><rect x="6.300" y="6.300" width="5.400" height="4.400" fill="#e8e8e8" transform="rotate(-25 9 8.500)"></rect></svg></div>
<div class="btn" style="left:201.6px;top:297.8px;width:17px;height:17.4px;background:#242424;border-color:#585858;"><svg viewBox="0 0 18 17"><rect x="5.500" y="5.500" width="7" height="6" fill="#e8e8e8"></rect><path d="M3.500 6V3.500H6M12 3.500h2.500V6M14.500 11v2.500H12M6 13.500H3.500V11" fill="none" stroke="#e8e8e8" stroke-width="1.400"></path></svg></div>
<div class="btn" style="left:221.8px;top:297.8px;width:17.2px;height:17.4px;background:#242424;border-color:#585858;"><svg viewBox="0 0 18 17"><path d="M11.500 3.800A5.500 5.500 0 1 0 14.200 7" fill="none" stroke="#e8e8e8" stroke-width="1.700"></path><path d="M15 2.500l-4.500.5 2.500 3.500z" fill="#e8e8e8"></path><rect x="6.300" y="6.300" width="5.400" height="4.400" fill="#e8e8e8" transform="rotate(25 9 8.500)"></rect></svg></div>
<div class="sep" style="left:242.5px;top:301.5px;height:9px"></div>
<div class="btn" style="left:257px;top:297.8px;width:17px;height:17.4px;"></div>
<div class="a" style="left:0;top:317.700px;width:262px;height:6.500px;background:#fff conic-gradient(#dcdcdc 25%,#fff 0 50%,#dcdcdc 0 75%,#fff 0) 0 0/6.400px 6.400px"></div>
<div class="hdr" style="left:0;top:327.3px;width:262px"><div class="c"><span style="transform: scaleX(0.893); transform-origin: 50% 50%;">Brush Size</span></div><svg class="a" style="right:11.500px;top:2.500px;width:9px;height:9px" viewBox="0 0 9 9"><path d="M5.500 2H1.500v5.500h5.500V4" fill="none" stroke="#aaa" stroke-width="1"></path><path d="M4 5l4-4M5.500 .800h2.700v2.700" fill="none" stroke="#aaa" stroke-width="1"></path></svg><svg class="a" style="right:-1.500px;top:3.500px;width:8px;height:8px" viewBox="0 0 8 8"><path d="M1 1l6 6M7 1l-6 6" stroke="#e8e8e8" stroke-width="2"></path></svg></div>
<div class="a" style="left:0;top:344.500px;width:250px;height:131px;background:#454343"></div>
<div class="a" style="left:1.2px;top:344px;width:29.200px;height:36.200px;background:#555"><div class="a" style="left:14.95px;top:14.65px;width:0.7px;height:0.7px;border-radius:50%;background:#ececec"></div><div class="a" style="left:0;width:29.200px;top:27.5px;text-align:center;line-height:10px"><span style="display: inline-block; font-size: 7.6px; color: rgb(240, 240, 240); white-space: nowrap; transform: scaleX(0.642); transform-origin: 50% 50%;">1</span></div></div>
<div class="a" style="left:31.15px;top:344px;width:29.200px;height:36.200px;background:#555"><div class="a" style="left:14.8px;top:14.5px;width:1px;height:1px;border-radius:50%;background:#ececec"></div><div class="a" style="left:0;width:29.200px;top:27.5px;text-align:center;line-height:10px"><span style="display: inline-block; font-size: 7.6px; color: rgb(240, 240, 240); white-space: nowrap; transform: scaleX(0.782); transform-origin: 50% 50%;">1.5</span></div></div>
<div class="a" style="left:61.1px;top:344px;width:29.200px;height:36.200px;background:#555"><div class="a" style="left:14.6px;top:14.3px;width:1.4px;height:1.4px;border-radius:50%;background:#ececec"></div><div class="a" style="left:0;width:29.200px;top:27.5px;text-align:center;line-height:10px"><span style="display: inline-block; font-size: 7.6px; color: rgb(240, 240, 240); white-space: nowrap; transform: scaleX(0.963); transform-origin: 50% 50%;">2</span></div></div>
<div class="a" style="left:91.05px;top:344px;width:29.200px;height:36.200px;background:#555"><div class="a" style="left:14.3px;top:14px;width:2px;height:2px;border-radius:50%;background:#ececec"></div><div class="a" style="left:0;width:29.200px;top:27.5px;text-align:center;line-height:10px"><span style="display: inline-block; font-size: 7.6px; color: rgb(240, 240, 240); white-space: nowrap; transform: scaleX(0.963); transform-origin: 50% 50%;">3</span></div></div>
<div class="a" style="left:121px;top:344px;width:29.200px;height:36.200px;background:#555"><div class="a" style="left:13.8px;top:13.5px;width:3px;height:3px;border-radius:50%;background:#ececec"></div><div class="a" style="left:0;width:29.200px;top:27.5px;text-align:center;line-height:10px"><span style="display: inline-block; font-size: 7.6px; color: rgb(240, 240, 240); white-space: nowrap; transform: scaleX(0.963); transform-origin: 50% 50%;">4</span></div></div>
<div class="a" style="left:150.95px;top:344px;width:29.200px;height:36.200px;background:#555"><div class="a" style="left:13.4px;top:13.1px;width:3.8px;height:3.8px;border-radius:50%;background:#ececec"></div><div class="a" style="left:0;width:29.200px;top:27.5px;text-align:center;line-height:10px"><span style="display: inline-block; font-size: 7.6px; color: rgb(240, 240, 240); white-space: nowrap; transform: scaleX(0.963); transform-origin: 50% 50%;">5</span></div></div>
<div class="a" style="left:180.9px;top:344px;width:29.200px;height:36.200px;background:#555"><div class="a" style="left:12.6px;top:12.3px;width:5.4px;height:5.4px;border-radius:50%;background:#ececec"></div><div class="a" style="left:0;width:29.200px;top:27.5px;text-align:center;line-height:10px"><span style="display: inline-block; font-size: 7.6px; color: rgb(240, 240, 240); white-space: nowrap; transform: scaleX(0.963); transform-origin: 50% 50%;">7</span></div></div>
<div class="a" style="left:210.85px;top:344px;width:29.200px;height:36.200px;background:#555"><div class="a" style="left:11.3px;top:11px;width:8px;height:8px;border-radius:50%;background:#ececec"></div><div class="a" style="left:0;width:29.200px;top:27.5px;text-align:center;line-height:10px"><span style="display: inline-block; font-size: 7.6px; color: rgb(240, 240, 240); white-space: nowrap; transform: scaleX(0.977); transform-origin: 50% 50%;">10</span></div></div>
<div class="a" style="left:1.2px;top:381px;width:29.200px;height:36.200px;background:#555"><div class="a" style="left:10.8px;top:10.7px;width:9px;height:9px;border-radius:50%;background:#ececec"></div><div class="a" style="left:0;width:29.200px;top:28.3px;text-align:center;line-height:10px"><span style="display: inline-block; font-size: 7.6px; color: rgb(240, 240, 240); white-space: nowrap; transform: scaleX(0.977); transform-origin: 50% 50%;">12</span></div></div>
<div class="a" style="left:31.15px;top:381px;width:29.200px;height:36.200px;background:#555"><div class="a" style="left:9.7px;top:9.6px;width:11.2px;height:11.2px;border-radius:50%;background:#ececec"></div><div class="a" style="left:0;width:29.200px;top:28.3px;text-align:center;line-height:10px"><span style="display: inline-block; font-size: 7.6px; color: rgb(240, 240, 240); white-space: nowrap; transform: scaleX(0.977); transform-origin: 50% 50%;">15</span></div></div>
<div class="a" style="left:61.1px;top:381px;width:29.200px;height:36.200px;background:#555"><div class="a" style="left:7.55px;top:7.45px;width:15.5px;height:15.5px;border-radius:50%;background:#ececec"></div><div class="a" style="left:0;width:29.200px;top:28.3px;text-align:center;line-height:10px"><span style="display: inline-block; font-size: 7.6px; color: rgb(240, 240, 240); white-space: nowrap; transform: scaleX(0.977); transform-origin: 50% 50%;">20</span></div></div>
<div class="a" style="left:91.05px;top:381px;width:29.200px;height:36.200px;background:#555"><div class="a" style="left:6.2px;top:6.1px;width:18.2px;height:18.2px;border-radius:50%;background:#ececec"></div><div class="a" style="left:0;width:29.200px;top:28.3px;text-align:center;line-height:10px"><span style="display: inline-block; font-size: 7.6px; color: rgb(240, 240, 240); white-space: nowrap; transform: scaleX(0.977); transform-origin: 50% 50%;">25</span></div></div>
<div class="a" style="left:121px;top:381px;width:29.200px;height:36.200px;background:#555"><div class="a" style="left:6.2px;top:6.1px;width:18.2px;height:18.2px;border-radius:50%;background:#ececec"></div><div class="a" style="left:0;width:29.200px;top:28.3px;text-align:center;line-height:10px"><span style="display: inline-block; font-size: 7.6px; color: rgb(240, 240, 240); white-space: nowrap; transform: scaleX(0.977); transform-origin: 50% 50%;">30</span></div></div>
<div class="a" style="left:150.95px;top:381px;width:29.200px;height:36.200px;background:#555"><div class="a" style="left:6.2px;top:6.1px;width:18.2px;height:18.2px;border-radius:50%;background:#ececec"></div><div class="a" style="left:0;width:29.200px;top:28.3px;text-align:center;line-height:10px"><span style="display: inline-block; font-size: 7.6px; color: rgb(240, 240, 240); white-space: nowrap; transform: scaleX(0.977); transform-origin: 50% 50%;">40</span></div></div>
<div class="a" style="left:180.9px;top:381px;width:29.200px;height:36.200px;background:#555"><div class="a" style="left:6.2px;top:6.1px;width:18.2px;height:18.2px;border-radius:50%;background:#ececec"></div><div class="a" style="left:0;width:29.200px;top:28.3px;text-align:center;line-height:10px"><span style="display: inline-block; font-size: 7.6px; color: rgb(240, 240, 240); white-space: nowrap; transform: scaleX(0.977); transform-origin: 50% 50%;">50</span></div></div>
<div class="a" style="left:210.85px;top:381px;width:29.200px;height:36.200px;background:#555"><div class="a" style="left:6.2px;top:6.1px;width:18.2px;height:18.2px;border-radius:50%;background:#ececec"></div><div class="a" style="left:0;width:29.200px;top:28.3px;text-align:center;line-height:10px"><span style="display: inline-block; font-size: 7.6px; color: rgb(240, 240, 240); white-space: nowrap; transform: scaleX(0.977); transform-origin: 50% 50%;">70</span></div></div>
<div class="a" style="left:1.2px;top:418px;width:29.200px;height:36.200px;background:#555"><div class="a" style="left:6.2px;top:6.5px;width:18.2px;height:18.2px;border-radius:50%;background:#ececec"></div><div class="a" style="left:0;width:29.200px;top:28.2px;text-align:center;line-height:10px"><span style="display: inline-block; font-size: 7.6px; color: rgb(240, 240, 240); white-space: nowrap; transform: scaleX(0.958); transform-origin: 50% 50%;">100</span></div></div>
<div class="a" style="left:31.15px;top:418px;width:29.200px;height:36.200px;background:#555"><div class="a" style="left:6.2px;top:6.5px;width:18.2px;height:18.2px;border-radius:50%;background:#ececec"></div><div class="a" style="left:0;width:29.200px;top:28.2px;text-align:center;line-height:10px"><span style="display: inline-block; font-size: 7.6px; color: rgb(240, 240, 240); white-space: nowrap; transform: scaleX(0.958); transform-origin: 50% 50%;">150</span></div></div>
<div class="a" style="left:61.1px;top:418px;width:29.200px;height:36.200px;background:#555"><div class="a" style="left:6.2px;top:6.5px;width:18.2px;height:18.2px;border-radius:50%;background:#ececec"></div><div class="a" style="left:0;width:29.200px;top:28.2px;text-align:center;line-height:10px"><span style="display: inline-block; font-size: 7.6px; color: rgb(240, 240, 240); white-space: nowrap; transform: scaleX(0.958); transform-origin: 50% 50%;">200</span></div></div>
<div class="a" style="left:91.05px;top:418px;width:29.200px;height:36.200px;background:#555"><div class="a" style="left:6.2px;top:6.5px;width:18.2px;height:18.2px;border-radius:50%;background:#ececec"></div><div class="a" style="left:0;width:29.200px;top:28.2px;text-align:center;line-height:10px"><span style="display: inline-block; font-size: 7.6px; color: rgb(240, 240, 240); white-space: nowrap; transform: scaleX(0.958); transform-origin: 50% 50%;">300</span></div></div>
<div class="a" style="left:121px;top:418px;width:29.200px;height:36.200px;background:#555"><div class="a" style="left:6.2px;top:6.5px;width:18.2px;height:18.2px;border-radius:50%;background:#ececec"></div><div class="a" style="left:0;width:29.200px;top:28.2px;text-align:center;line-height:10px"><span style="display: inline-block; font-size: 7.6px; color: rgb(240, 240, 240); white-space: nowrap; transform: scaleX(0.958); transform-origin: 50% 50%;">400</span></div></div>
<div class="a" style="left:150.95px;top:418px;width:29.200px;height:36.200px;background:#555"><div class="a" style="left:6.2px;top:6.5px;width:18.2px;height:18.2px;border-radius:50%;background:#ececec"></div><div class="a" style="left:0;width:29.200px;top:28.2px;text-align:center;line-height:10px"><span style="display: inline-block; font-size: 7.6px; color: rgb(240, 240, 240); white-space: nowrap; transform: scaleX(0.958); transform-origin: 50% 50%;">500</span></div></div>
<div class="a" style="left:180.9px;top:418px;width:29.200px;height:36.200px;background:#555"><div class="a" style="left:6.2px;top:6.5px;width:18.2px;height:18.2px;border-radius:50%;background:#ececec"></div><div class="a" style="left:0;width:29.200px;top:28.2px;text-align:center;line-height:10px"><span style="display: inline-block; font-size: 7.6px; color: rgb(240, 240, 240); white-space: nowrap; transform: scaleX(0.958); transform-origin: 50% 50%;">700</span></div></div>
<div class="a" style="left:210.85px;top:418px;width:29.200px;height:36.200px;background:#555"><div class="a" style="left:6.2px;top:6.5px;width:18.2px;height:18.2px;border-radius:50%;background:#ececec"></div><div class="a" style="left:0;width:29.200px;top:28.2px;text-align:center;line-height:10px"><span style="display: inline-block; font-size: 7.6px; color: rgb(240, 240, 240); white-space: nowrap; transform: scaleX(0.949); transform-origin: 50% 50%;">1000</span></div></div>
<div class="a" style="left:250px;top:344.500px;width:12px;height:131px;background:#2a2a2a"></div>
<div class="a" style="left:253px;top:346px;border:3px solid transparent;border-bottom:4.500px solid #bbb;border-top:0"></div>
<div class="a" style="left:253px;top:469px;border:3px solid transparent;border-top:4.500px solid #bbb;border-bottom:0"></div>
<div class="a" style="left:250.500px;top:353px;width:14px;height:113px;border-radius:5px;background:linear-gradient(90deg,#7a7a7a,#6c6c6c)"></div>
</div>
<div class="a" style="left:0;top:535px;width:1024px;height:14px;background:#232323">
<div class="t" style="left: 7px; top: 0.5px; font-size: 9.3px; color: rgb(218, 218, 218); transform: scaleX(0.853); transform-origin: 0px 50%;">1600 * 1200 pixel</div>
<div class="t" style="left: 77.5px; top: 0.5px; font-size: 9.3px; color: rgb(218, 218, 218); transform: scaleX(0.906); transform-origin: 0px 50%;">(11.6 * 8.7cm)</div>
<div class="t" style="left: 137.5px; top: 0.5px; font-size: 9.3px; color: rgb(218, 218, 218); transform: scaleX(0.934); transform-origin: 0px 50%;">350 dpi</div>
<div class="t" style="left: 174px; top: 0.5px; font-size: 9.3px; color: rgb(218, 218, 218); transform: scaleX(0.871); transform-origin: 0px 50%;">46 %</div>
<div class="t" style="left: 201px; top: 0.5px; font-size: 9.3px; color: rgb(218, 218, 218); transform: scaleX(0.866); transform-origin: 0px 50%;">( 484, 836 )</div>
<div class="t" style="left: 249px; top: 0.5px; font-size: 9.3px; color: rgb(218, 218, 218); transform: scaleX(0.943); transform-origin: 0px 50%;">Draw a straight line by holding down Shift, Change a brush size by holding down Ctrl, Alt, and dragging</div>
</div>
<div class="a" style="left:0;top:548.500px;width:1024px;height:30px;overflow:hidden;background:radial-gradient(ellipse 130px 22px at 110px 16px,#1a2560,rgba(20,28,80,0) 100%),radial-gradient(ellipse 160px 20px at 480px 12px,#161d50,rgba(20,28,80,0) 100%),radial-gradient(ellipse 140px 20px at 830px 10px,#18205a,rgba(20,28,80,0) 100%),linear-gradient(#0e1030,#0b0c26);border-top:1px solid #5a6284">
<div class="a" style="left:0;top:-1px;width:2.500px;height:31px;background:#2e2e2e"></div>
<div class="a" style="left:9.200px;top:0.500px;width:27.800px;height:27.800px;border-radius:50%;background:radial-gradient(circle at 50% 95%,#38c8f0 0,#1a78c8 35%,#0e4a8a 60%,#123868 100%);box-shadow:0 0 2px 1px rgba(120,190,255,.55),inset 0 0 2px 1px rgba(190,230,255,.7)"></div>
<svg class="a" style="left:9.200px;top:0.500px;width:27.800px;height:27.800px" viewBox="0 0 28 28"><g transform="translate(14 14.500) scale(1.280) translate(-13.200 -14.400)"><path d="M7.500 8.500c2-1.200 4-1 5.800 0L12 13.500c-1.800-1-3.800-1.200-5.800 0z" fill="#f2652a"></path><path d="M14.600 9c2 1 4 1.200 6 0l-1.400 5c-2 1.200-4 1-6 0z" fill="#8cc63f"></path><path d="M5.900 14.700c2-1.200 4-1 5.800 0l-1.400 5c-1.800-1-3.800-1.200-5.800 0z" fill="#2ea3f2"></path><path d="M12.900 15.200c2 1 4 1.200 6 0l-1.400 5c-2 1.200-4 1-6 0z" fill="#fdc70c"></path></g><ellipse cx="14" cy="7" rx="10" ry="5.500" fill="rgba(255,255,255,.22)"></ellipse></svg>
<div class="a" style="left:44.500px;top:4px;width:8px;height:22px;background:radial-gradient(circle,#2c3260 .6px,rgba(0,0,0,0) .9px) 0 0/2.600px 2.600px"></div>
<svg class="a" style="left:68px;top:1.200px;width:28px;height:26px" viewBox="68 551 28 26"><path d="M71.500 555L85.500 563.500L71.500 572.200z" fill="#6b2fc4"></path><path d="M92 555L82 563.500L92 572.200z" fill="#cbb4f2"></path></svg>
<svg class="a" style="left:114px;top:0;width:30px;height:30px" viewBox="114 549 30 30"><circle cx="128.200" cy="563.800" r="11.300" fill="#5cb65a" stroke="#eef6ee" stroke-width="1.200"></circle><path d="M128.200 563.800L131 551L140.500 553L139.500 560z" fill="#0e1030"></path><path d="M130.500 558.500L131.800 552.500L133.300 553L131.800 559z" fill="#f0902a"></path><path d="M133 560L137.800 553.500L139.300 554.800L134.300 561z" fill="#f0902a"></path><path d="M134.800 562.300L139.500 559.500L140 561.300L135.300 563.800z" fill="#f0902a"></path><circle cx="128" cy="563.800" r="4.400" fill="#5cb65a" stroke="#f4faf4" stroke-width="1.800"></circle></svg>
<div class="a" style="left:153px;top:0.500px;width:43.3px;height:28.500px;border-radius:2px;background:linear-gradient(#5c5e7c,#3a3c58 45%,#26283e 50%,#1a1b32);border:1px solid #64668a"></div>
<div class="a" style="left:199.2px;top:0.500px;width:43.6px;height:28.500px;border-radius:2px;background:linear-gradient(#8e90a6,#70728a 45%,#626480 50%,#8f91a8);border:1px solid #b4b6c8"></div>
<div class="a" style="left:246px;top:0.500px;width:43.3px;height:28.500px;border-radius:2px;background:linear-gradient(#5c5e7c,#3a3c58 45%,#26283e 50%,#1a1b32);border:1px solid #64668a"></div>
<div class="a" style="left:163.600px;top:3.400px;width:22.800px;height:22.800px;border-radius:50%;background:conic-gradient(from -60deg,#e8453c 0 120deg,#f8c11c 120deg 240deg,#34a853 240deg 360deg)"></div>
<div class="a" style="left:169.500px;top:9.300px;width:11px;height:11px;border-radius:50%;background:#4688f0;border:1.800px solid #f4f6fa"></div>
<div class="a" style="left:209px;top:2.600px;width:24px;height:24px;border-radius:4px;background:#f6f6f6"></div>
<svg class="a" style="left:209px;top:2.600px;width:24px;height:24px" viewBox="0 0 24 24"><defs><linearGradient id="mbg2" x1="0.1" y1="0" x2="0.7" y2="1"><stop offset="0" stop-color="#e8352c"></stop><stop offset=".32" stop-color="#f08a22"></stop><stop offset=".55" stop-color="#46b85c"></stop><stop offset="1" stop-color="#12a0c4"></stop></linearGradient></defs><path d="M15.800 3.400C13 5.500 6 7 5.200 12.500A7 7 0 1 0 18.800 10C17.800 8.800 16.300 9.200 15.200 10.200C16.600 7.700 16.600 5.200 15.800 3.400Z" fill="url(#mbg2)"></path></svg>
<svg class="a" style="left:252px;top:1px;width:32px;height:28px" viewBox="252 550 32 28"><path d="M256.500 568c-1-5 4-9.500 10.500-9.500s10.500 3.500 10 8-5 7-9 6.500c-2-.3-2-2-3.500-2.500s-3 .5-4.500 0-3-1-3.500-2.500z" fill="#dceaf8" stroke="#9ab4d0" stroke-width=".6"></path><circle cx="260.500" cy="564.500" r="1.700" fill="#e05a3a"></circle><circle cx="264.500" cy="561.200" r="1.700" fill="#7ab648"></circle><circle cx="269.500" cy="560.500" r="1.600" fill="#f0d040"></circle><circle cx="265.800" cy="566.800" r="1.700" fill="#2a4a9a"></circle><path d="M277.800 553.200L268 574.500" stroke="#d8904a" stroke-width="2" stroke-linecap="round"></path><path d="M278 552.800L276 557" stroke="#f0c890" stroke-width="2.600" stroke-linecap="round"></path></svg>
<div class="a" style="left:913px;top:5px;width:6px;height:22px;background:radial-gradient(circle,#3a4068 .6px,rgba(0,0,0,0) .9px) 0 0/2.600px 2.600px"></div>
<div class="t" style="left: 926px; top: 6.5px; font-size: 9.5px; color: rgb(240, 240, 240); transform: scaleX(0.975); transform-origin: 0px 50%;">EN</div>
<div class="a" style="left:949px;top:14px;border:3px solid transparent;border-bottom:4px solid #f0f0f0;border-top:0"></div>
<div class="t" style="left: 970px; top: 0.5px; font-size: 9.5px; color: rgb(244, 244, 244); transform: scaleX(0.929); transform-origin: 0px 50%;">8:08 PM</div>
<div class="t" style="left: 966.5px; top: 15px; font-size: 9.5px; color: rgb(244, 244, 244); transform: scaleX(0.89); transform-origin: 0px 50%;">6/25/2021</div>
<div class="a" style="left:1016px;top:-1px;width:9px;height:31px;background:linear-gradient(90deg,#5a5c70,#34364a);border:1px solid #787a90"></div>
</div>
</div></div>

</body></html>
